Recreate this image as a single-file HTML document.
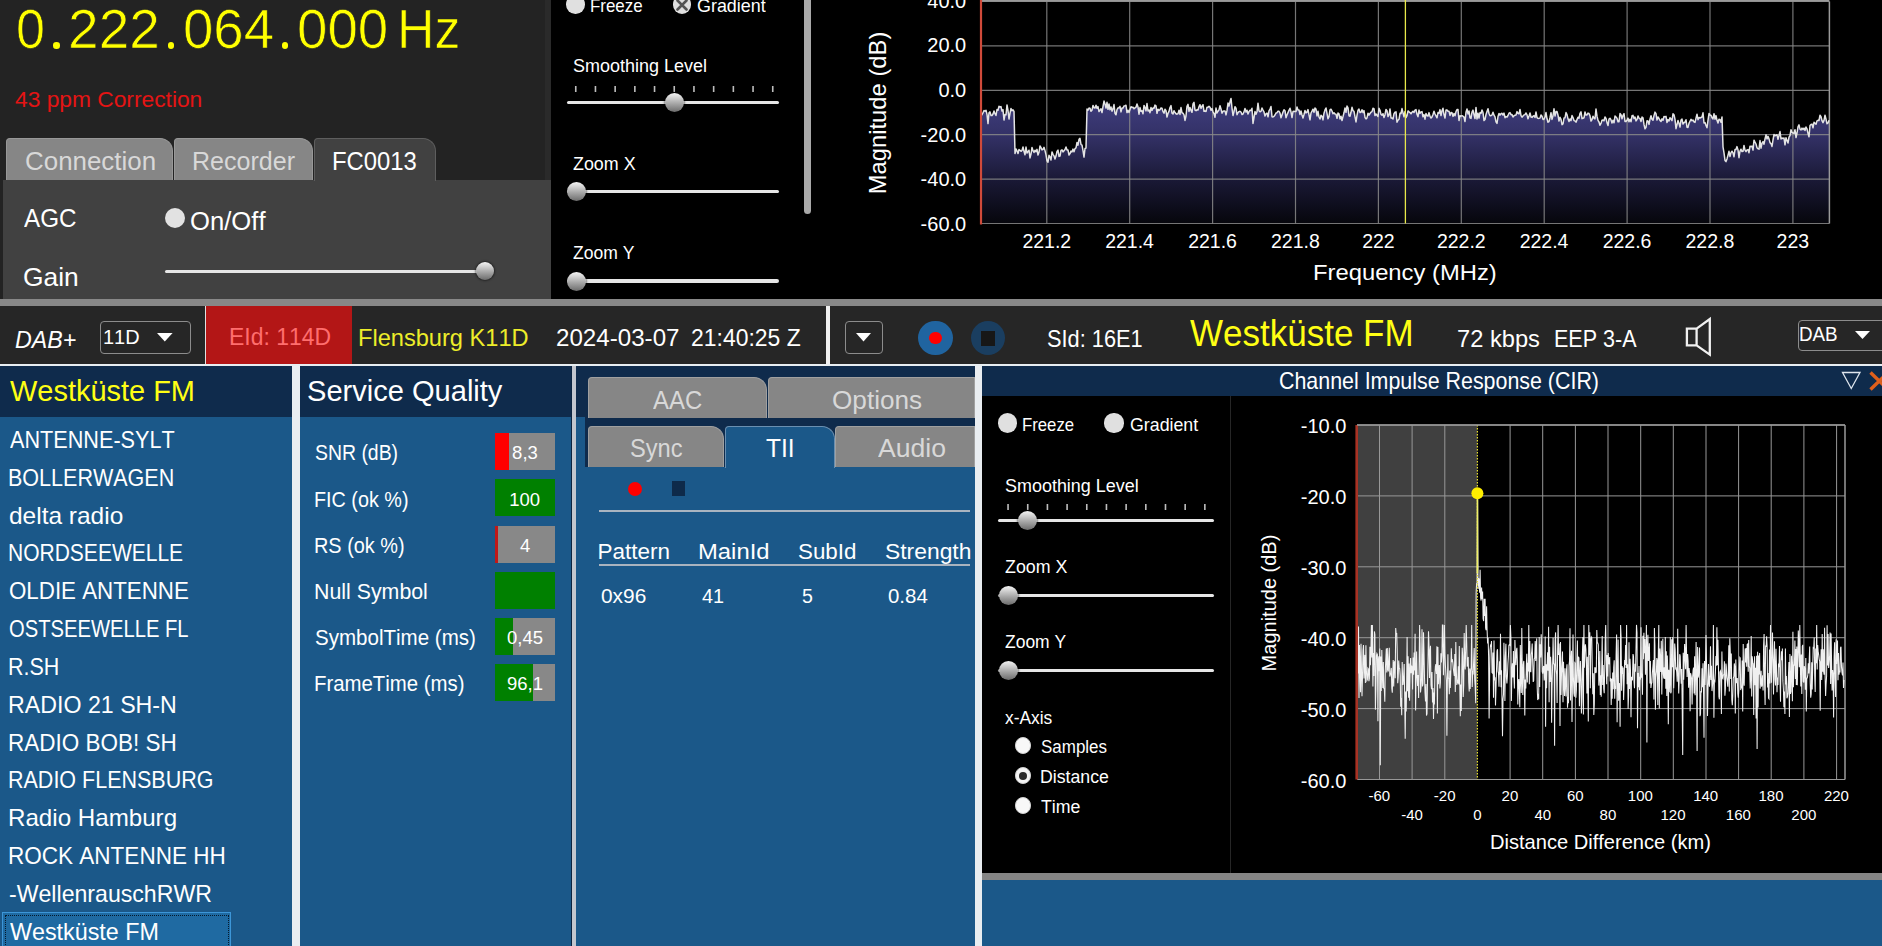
<!DOCTYPE html>
<html><head><meta charset="utf-8"><title>DAB Receiver</title>
<style>
html,body{margin:0;padding:0;width:1882px;height:946px;overflow:hidden;background:#000}
body{position:relative;font-family:"Liberation Sans",sans-serif}
.t{position:absolute;white-space:pre;transform-origin:0 0;font-kerning:none}
.r{position:absolute}
.s{position:absolute;overflow:visible}
</style></head><body>
<div class="r" style="left:0px;top:0px;width:1882px;height:946px;background:#000;"></div>
<div class="r" style="left:0px;top:0px;width:551px;height:299px;background:#232323;"></div>
<div class="r" style="left:545px;top:0px;width:6px;height:180px;background:#2a2a2a;"></div>
<div class="r" style="left:3px;top:180px;width:548px;height:119px;background:#414141;"></div>
<div class="r" style="left:0px;top:299px;width:1882px;height:7px;background:#888888;"></div>
<div class="r" style="left:0px;top:306px;width:1882px;height:58px;background:#262626;"></div>
<div class="r" style="left:0px;top:364px;width:1882px;height:2px;background:#e8eef2;"></div>
<div class="r" style="left:0px;top:366px;width:292px;height:580px;background:#1b5889;"></div>
<div class="r" style="left:0px;top:366px;width:292px;height:51px;background:#0f2b4c;"></div>
<div class="r" style="left:292px;top:366px;width:8px;height:580px;background:#e9edf1;"></div>
<div class="r" style="left:300px;top:366px;width:272px;height:580px;background:#1b5889;"></div>
<div class="r" style="left:300px;top:366px;width:272px;height:51px;background:#0f2b4c;"></div>
<div class="r" style="left:571px;top:366px;width:6px;height:580px;background:#0c2440;"></div>
<div class="r" style="left:572px;top:366px;width:4px;height:580px;background:#c2c6ce;"></div>
<div class="r" style="left:576px;top:366px;width:399px;height:580px;background:#1b5889;"></div>
<div class="r" style="left:576px;top:366px;width:399px;height:51px;background:#0f2b4c;"></div>
<div class="r" style="left:585px;top:417px;width:390px;height:50px;background:#0f2b4c;"></div>
<div class="r" style="left:975px;top:366px;width:7px;height:580px;background:#e9edf1;"></div>
<div class="r" style="left:982px;top:366px;width:900px;height:580px;background:#1b5889;"></div>
<div class="r" style="left:982px;top:366px;width:900px;height:30px;background:#0f2b4c;"></div>
<div class="r" style="left:982px;top:396px;width:900px;height:477px;background:#000;"></div>
<div class="r" style="left:982px;top:873px;width:900px;height:7px;background:#858585;"></div>
<div class="t" style="left:16.12px;top:-2px;font-size:55px;line-height:63px;color:#ffff00;transform:scaleX(0.9470);-webkit-text-stroke:0.7px #232323;">0</div>
<div class="r" style="left:53.4px;top:42.2px;width:6.6px;height:6.6px;border-radius:50%;background:#ffff00"></div>
<div class="t" style="left:68.05px;top:-2px;font-size:55px;line-height:63px;color:#ffff00;-webkit-text-stroke:0.7px #232323;">222</div>
<div class="r" style="left:167.6px;top:42.2px;width:6.6px;height:6.6px;border-radius:50%;background:#ffff00"></div>
<div class="t" style="left:182.52px;top:-2px;font-size:55px;line-height:63px;color:#ffff00;transform:scaleX(0.9929);-webkit-text-stroke:0.7px #232323;">064</div>
<div class="r" style="left:281.9px;top:42.2px;width:6.6px;height:6.6px;border-radius:50%;background:#ffff00"></div>
<div class="t" style="left:296.81px;top:-2px;font-size:55px;line-height:63px;color:#ffff00;transform:scaleX(0.9949);-webkit-text-stroke:0.7px #232323;">000</div>
<div class="t" style="left:396.55px;top:-2px;font-size:55px;line-height:63px;color:#ffff00;transform:scaleX(0.9425);-webkit-text-stroke:0.7px #232323;">Hz</div>
<div class="t" style="left:15.24px;top:87px;font-size:22px;line-height:25px;color:#e41414;transform:scaleX(1.0347);">43 ppm Correction</div>
<div class="r" style="left:6px;top:138px;width:167px;height:42px;background:#868686;border:1px solid #989898;border-bottom:none;box-sizing:border-box;border-radius:4px 13px 0 0"></div>
<div class="r" style="left:174px;top:138px;width:139px;height:42px;background:#868686;border:1px solid #989898;border-bottom:none;box-sizing:border-box;border-radius:4px 13px 0 0"></div>
<div class="r" style="left:314px;top:138px;width:122px;height:43px;background:#414141;border:1px solid #5e5e5e;border-bottom:none;box-sizing:border-box;border-radius:4px 13px 0 0"></div>
<div class="t" style="left:24.50px;top:147px;font-size:25.4px;line-height:29px;color:#d8d8d8;transform:scaleX(1.0207);">Connection</div>
<div class="t" style="left:192.00px;top:147px;font-size:25.4px;line-height:29px;color:#d8d8d8;transform:scaleX(0.9865);">Recorder</div>
<div class="t" style="left:331.69px;top:147px;font-size:25.4px;line-height:29px;color:#fff;transform:scaleX(0.9398);">FC0013</div>
<div class="t" style="left:24.40px;top:204px;font-size:25.5px;line-height:29px;color:#fff;transform:scaleX(0.9500);">AGC</div>
<div class="t" style="left:189.85px;top:207px;font-size:25.5px;line-height:29px;color:#fff;transform:scaleX(1.0059);">On/Off</div>
<div class="t" style="left:23.08px;top:263px;font-size:25.5px;line-height:29px;color:#fff;transform:scaleX(1.0340);">Gain</div>
<div class="r" style="left:165.0px;top:207.6px;width:20.4px;height:20.4px;border-radius:50%;background:#e2e2e2;"></div>
<div class="r" style="left:165px;top:269.8px;width:319px;height:3.4px;border-radius:2px;background:#e6e6e6"></div>
<div class="r" style="left:475.5px;top:261.8px;width:18.4px;height:18.4px;border-radius:50%;background:linear-gradient(#f4f4f4,#a8a8a8 55%,#6c6c6c);box-shadow:0 0 2px 1px rgba(0,0,0,.45)"></div>
<div class="r" style="left:566.2px;top:-4.8px;width:18.6px;height:18.6px;border-radius:50%;background:#e0e0e0;"></div>
<div class="t" style="left:590.25px;top:-5px;font-size:18.5px;line-height:21px;color:#fff;transform:scaleX(0.9127);">Freeze</div>
<div class="r" style="left:672.7px;top:-4.8px;width:18.6px;height:18.6px;border-radius:50%;background:#e0e0e0;"></div>
<svg class="s" style="left:672px;top:-5px" width="20" height="20" viewBox="0 0 20 20"><path d="M5.5 5.5L14.5 14.5M14.5 5.5L5.5 14.5" stroke="#555" stroke-width="2.6" stroke-linecap="round"/></svg>
<div class="t" style="left:697.10px;top:-5px;font-size:18.5px;line-height:21px;color:#fff;transform:scaleX(0.9681);">Gradient</div>
<div class="t" style="left:572.79px;top:55px;font-size:18.3px;line-height:21px;color:#fff;transform:scaleX(0.9834);">Smoothing Level</div>
<svg class="s" style="left:566px;top:86px;" width="215" height="6" viewBox="0 0 215 6"><rect x="8.95" y="0" width="1.6" height="6" fill="#bdbdbd"/><rect x="28.65" y="0" width="1.6" height="6" fill="#bdbdbd"/><rect x="48.35" y="0" width="1.6" height="6" fill="#bdbdbd"/><rect x="68.05" y="0" width="1.6" height="6" fill="#bdbdbd"/><rect x="87.75" y="0" width="1.6" height="6" fill="#bdbdbd"/><rect x="107.45" y="0" width="1.6" height="6" fill="#bdbdbd"/><rect x="127.15" y="0" width="1.6" height="6" fill="#bdbdbd"/><rect x="146.85" y="0" width="1.6" height="6" fill="#bdbdbd"/><rect x="166.55" y="0" width="1.6" height="6" fill="#bdbdbd"/><rect x="186.25" y="0" width="1.6" height="6" fill="#bdbdbd"/><rect x="205.95" y="0" width="1.6" height="6" fill="#bdbdbd"/></svg>
<div class="r" style="left:566.7px;top:100.5px;width:212.79999999999995px;height:3.3px;border-radius:2px;background:#e6e6e6"></div>
<div class="r" style="left:665.0px;top:93.3px;width:19.0px;height:19.0px;border-radius:50%;background:linear-gradient(#f4f4f4,#a8a8a8 55%,#6c6c6c);box-shadow:0 0 2px 1px rgba(0,0,0,.45)"></div>
<div class="t" style="left:572.76px;top:153px;font-size:18.3px;line-height:21px;color:#fff;transform:scaleX(0.9773);">Zoom X</div>
<div class="r" style="left:566.7px;top:189.5px;width:212.79999999999995px;height:3.3px;border-radius:2px;background:#e6e6e6"></div>
<div class="r" style="left:567.0px;top:182.0px;width:19.0px;height:19.0px;border-radius:50%;background:linear-gradient(#f4f4f4,#a8a8a8 55%,#6c6c6c);box-shadow:0 0 2px 1px rgba(0,0,0,.45)"></div>
<div class="t" style="left:572.77px;top:242px;font-size:18.3px;line-height:21px;color:#fff;transform:scaleX(0.9591);">Zoom Y</div>
<div class="r" style="left:566.7px;top:279.4px;width:212.79999999999995px;height:3.3px;border-radius:2px;background:#e6e6e6"></div>
<div class="r" style="left:567.0px;top:271.8px;width:19.0px;height:19.0px;border-radius:50%;background:linear-gradient(#f4f4f4,#a8a8a8 55%,#6c6c6c);box-shadow:0 0 2px 1px rgba(0,0,0,.45)"></div>
<div class="r" style="left:804.4px;top:-4px;width:7px;height:218px;border-radius:4px;background:#a9a9a9"></div>
<svg class="s" style="left:0;top:0" width="1882" height="300" viewBox="0 0 1882 300"><defs><linearGradient id="sg" x1="0" y1="0" x2="0" y2="1"><stop offset="0" stop-color="#403e80"/><stop offset="0.3" stop-color="#333166"/><stop offset="0.65" stop-color="#1a1936"/><stop offset="1" stop-color="#06060c"/></linearGradient></defs><rect x="981" y="1.5" width="848.4000000000001" height="222.0" fill="#000"/><polygon points="981,223.5 981.0,114.2 982.0,114.8 983.0,112.7 984.0,110.5 985.0,111.2 986.0,110.3 987.0,114.4 988.0,123.6 989.0,112.8 990.0,111.9 991.0,115.5 992.0,115.6 993.0,114.0 994.0,110.9 995.0,113.7 996.0,115.5 997.0,109.5 998.0,110.3 999.0,106.3 1000.0,107.1 1001.0,106.6 1002.0,111.1 1003.0,109.7 1004.0,120.0 1005.0,114.6 1006.0,114.9 1007.0,104.9 1008.0,110.5 1009.0,119.0 1010.0,113.3 1011.0,108.5 1012.0,110.7 1013.0,109.8 1014.0,111.3 1015.0,153.6 1016.0,148.9 1017.0,150.9 1018.0,153.6 1019.0,149.5 1020.0,150.3 1021.0,151.3 1022.0,150.5 1023.0,146.9 1024.0,151.3 1025.0,154.7 1026.0,147.1 1027.0,153.0 1028.0,151.6 1029.0,150.2 1030.0,157.9 1031.0,154.1 1032.0,147.4 1033.0,150.7 1034.0,152.5 1035.0,150.3 1036.0,151.7 1037.0,149.4 1038.0,155.1 1039.0,152.3 1040.0,145.9 1041.0,147.6 1042.0,149.9 1043.0,149.3 1044.0,147.3 1045.0,150.6 1046.0,154.9 1047.0,160.8 1048.0,162.2 1049.0,155.3 1050.0,156.8 1051.0,160.0 1052.0,151.9 1053.0,154.3 1054.0,155.9 1055.0,159.0 1056.0,156.1 1057.0,151.4 1058.0,150.1 1059.0,156.4 1060.0,156.0 1061.0,150.4 1062.0,149.9 1063.0,151.9 1064.0,150.7 1065.0,149.5 1066.0,147.0 1067.0,149.9 1068.0,150.1 1069.0,155.0 1070.0,153.6 1071.0,151.1 1072.0,151.9 1073.0,149.1 1074.0,151.8 1075.0,148.6 1076.0,147.9 1077.0,142.4 1078.0,145.2 1079.0,139.3 1080.0,138.4 1081.0,144.5 1082.0,145.2 1083.0,150.6 1084.0,157.1 1085.0,148.5 1086.0,148.1 1087.0,109.1 1088.0,110.2 1089.0,108.1 1090.0,108.2 1091.0,111.2 1092.0,110.2 1093.0,105.4 1094.0,107.7 1095.0,108.0 1096.0,105.2 1097.0,108.3 1098.0,106.6 1099.0,111.6 1100.0,110.1 1101.0,108.8 1102.0,112.5 1103.0,106.7 1104.0,101.1 1105.0,103.9 1106.0,108.0 1107.0,102.3 1108.0,109.3 1109.0,104.0 1110.0,109.8 1111.0,107.0 1112.0,111.2 1113.0,108.9 1114.0,104.6 1115.0,113.3 1116.0,114.8 1117.0,109.6 1118.0,108.0 1119.0,107.7 1120.0,106.4 1121.0,111.9 1122.0,108.0 1123.0,108.1 1124.0,106.0 1125.0,105.7 1126.0,105.3 1127.0,112.6 1128.0,110.2 1129.0,112.5 1130.0,109.5 1131.0,106.7 1132.0,107.4 1133.0,107.2 1134.0,108.8 1135.0,107.9 1136.0,107.2 1137.0,104.0 1138.0,106.9 1139.0,114.2 1140.0,107.6 1141.0,111.3 1142.0,110.9 1143.0,113.7 1144.0,105.4 1145.0,107.5 1146.0,110.9 1147.0,103.6 1148.0,111.0 1149.0,110.1 1150.0,112.7 1151.0,107.5 1152.0,110.4 1153.0,108.1 1154.0,108.2 1155.0,105.1 1156.0,105.8 1157.0,113.3 1158.0,109.2 1159.0,110.5 1160.0,109.7 1161.0,108.0 1162.0,108.3 1163.0,111.6 1164.0,113.2 1165.0,109.3 1166.0,110.7 1167.0,117.1 1168.0,113.4 1169.0,111.4 1170.0,107.5 1171.0,105.6 1172.0,113.1 1173.0,114.0 1174.0,110.7 1175.0,112.5 1176.0,113.8 1177.0,114.2 1178.0,113.6 1179.0,110.3 1180.0,114.4 1181.0,107.6 1182.0,112.8 1183.0,113.2 1184.0,114.9 1185.0,120.4 1186.0,116.0 1187.0,106.3 1188.0,104.4 1189.0,111.4 1190.0,107.5 1191.0,110.3 1192.0,112.3 1193.0,104.0 1194.0,102.4 1195.0,110.1 1196.0,110.7 1197.0,109.8 1198.0,110.0 1199.0,106.7 1200.0,104.7 1201.0,108.4 1202.0,106.1 1203.0,104.7 1204.0,111.3 1205.0,111.1 1206.0,111.5 1207.0,107.2 1208.0,107.2 1209.0,106.3 1210.0,107.2 1211.0,110.4 1212.0,108.5 1213.0,111.8 1214.0,113.6 1215.0,117.2 1216.0,108.1 1217.0,113.0 1218.0,111.2 1219.0,109.9 1220.0,105.7 1221.0,109.0 1222.0,113.2 1223.0,111.3 1224.0,111.1 1225.0,110.9 1226.0,114.9 1227.0,110.4 1228.0,103.1 1229.0,106.0 1230.0,101.8 1231.0,98.4 1232.0,108.1 1233.0,115.5 1234.0,111.5 1235.0,106.7 1236.0,108.1 1237.0,114.7 1238.0,112.7 1239.0,111.6 1240.0,111.3 1241.0,112.0 1242.0,114.6 1243.0,114.0 1244.0,111.9 1245.0,108.4 1246.0,112.1 1247.0,110.2 1248.0,114.0 1249.0,111.6 1250.0,110.3 1251.0,110.6 1252.0,108.2 1253.0,123.4 1254.0,117.5 1255.0,111.6 1256.0,114.3 1257.0,111.8 1258.0,103.2 1259.0,110.8 1260.0,111.8 1261.0,111.3 1262.0,108.0 1263.0,110.1 1264.0,111.8 1265.0,116.0 1266.0,113.8 1267.0,113.1 1268.0,116.8 1269.0,110.8 1270.0,109.1 1271.0,106.5 1272.0,116.8 1273.0,117.0 1274.0,116.3 1275.0,115.0 1276.0,113.0 1277.0,112.7 1278.0,111.2 1279.0,111.3 1280.0,113.2 1281.0,117.8 1282.0,115.0 1283.0,112.0 1284.0,109.8 1285.0,110.7 1286.0,117.7 1287.0,115.1 1288.0,112.6 1289.0,110.4 1290.0,108.2 1291.0,112.0 1292.0,117.6 1293.0,111.5 1294.0,111.2 1295.0,111.6 1296.0,111.6 1297.0,106.9 1298.0,110.1 1299.0,110.0 1300.0,114.5 1301.0,110.9 1302.0,115.0 1303.0,118.0 1304.0,114.5 1305.0,110.5 1306.0,112.9 1307.0,112.1 1308.0,109.6 1309.0,114.9 1310.0,119.8 1311.0,113.0 1312.0,111.2 1313.0,109.2 1314.0,112.4 1315.0,108.0 1316.0,109.0 1317.0,115.9 1318.0,111.3 1319.0,117.0 1320.0,119.0 1321.0,115.2 1322.0,116.3 1323.0,119.9 1324.0,113.2 1325.0,109.9 1326.0,108.0 1327.0,113.3 1328.0,118.8 1329.0,116.7 1330.0,109.9 1331.0,109.2 1332.0,111.0 1333.0,113.7 1334.0,112.8 1335.0,114.0 1336.0,114.2 1337.0,118.3 1338.0,113.0 1339.0,113.9 1340.0,118.9 1341.0,116.2 1342.0,120.5 1343.0,116.6 1344.0,112.8 1345.0,107.9 1346.0,112.3 1347.0,106.0 1348.0,107.9 1349.0,115.9 1350.0,116.3 1351.0,112.3 1352.0,107.3 1353.0,110.7 1354.0,111.4 1355.0,116.8 1356.0,121.9 1357.0,115.3 1358.0,110.3 1359.0,109.1 1360.0,112.6 1361.0,112.3 1362.0,109.7 1363.0,112.6 1364.0,110.6 1365.0,117.5 1366.0,118.9 1367.0,117.9 1368.0,113.2 1369.0,115.2 1370.0,113.5 1371.0,112.2 1372.0,111.6 1373.0,108.3 1374.0,108.6 1375.0,115.6 1376.0,114.0 1377.0,115.2 1378.0,116.4 1379.0,108.2 1380.0,110.3 1381.0,114.4 1382.0,115.3 1383.0,113.7 1384.0,117.5 1385.0,114.7 1386.0,109.5 1387.0,110.7 1388.0,116.6 1389.0,115.1 1390.0,108.9 1391.0,118.0 1392.0,118.1 1393.0,119.0 1394.0,113.7 1395.0,112.3 1396.0,111.9 1397.0,122.2 1398.0,120.2 1399.0,119.3 1400.0,113.3 1401.0,113.5 1402.0,108.6 1403.0,112.7 1404.0,116.8 1405.0,111.5 1406.0,117.6 1407.0,115.7 1408.0,110.9 1409.0,111.9 1410.0,112.6 1411.0,113.8 1412.0,112.2 1413.0,111.2 1414.0,112.4 1415.0,110.1 1416.0,109.6 1417.0,114.3 1418.0,116.7 1419.0,110.1 1420.0,113.4 1421.0,111.9 1422.0,111.6 1423.0,116.8 1424.0,114.6 1425.0,119.2 1426.0,113.5 1427.0,115.6 1428.0,116.1 1429.0,112.6 1430.0,116.4 1431.0,118.0 1432.0,116.9 1433.0,114.5 1434.0,111.2 1435.0,114.0 1436.0,115.8 1437.0,117.8 1438.0,112.6 1439.0,113.3 1440.0,109.6 1441.0,115.6 1442.0,110.7 1443.0,108.3 1444.0,114.6 1445.0,118.0 1446.0,110.0 1447.0,110.1 1448.0,111.3 1449.0,111.2 1450.0,115.4 1451.0,112.4 1452.0,112.8 1453.0,116.4 1454.0,113.5 1455.0,115.8 1456.0,111.6 1457.0,109.5 1458.0,109.6 1459.0,120.5 1460.0,115.8 1461.0,116.2 1462.0,115.7 1463.0,116.2 1464.0,117.1 1465.0,121.5 1466.0,112.3 1467.0,109.0 1468.0,113.9 1469.0,110.9 1470.0,117.9 1471.0,118.4 1472.0,112.1 1473.0,110.1 1474.0,114.6 1475.0,118.5 1476.0,107.4 1477.0,118.9 1478.0,113.2 1479.0,118.1 1480.0,112.7 1481.0,113.3 1482.0,109.9 1483.0,112.5 1484.0,120.6 1485.0,119.5 1486.0,114.6 1487.0,111.5 1488.0,108.7 1489.0,113.5 1490.0,115.7 1491.0,115.7 1492.0,115.0 1493.0,112.2 1494.0,115.2 1495.0,116.9 1496.0,121.9 1497.0,123.4 1498.0,116.5 1499.0,113.5 1500.0,115.2 1501.0,113.7 1502.0,113.3 1503.0,115.0 1504.0,113.1 1505.0,117.7 1506.0,116.6 1507.0,117.1 1508.0,115.5 1509.0,113.2 1510.0,112.6 1511.0,114.7 1512.0,114.6 1513.0,117.0 1514.0,115.8 1515.0,115.2 1516.0,115.0 1517.0,111.6 1518.0,113.4 1519.0,113.9 1520.0,109.4 1521.0,115.7 1522.0,117.2 1523.0,116.0 1524.0,114.9 1525.0,114.6 1526.0,113.0 1527.0,114.9 1528.0,118.8 1529.0,116.0 1530.0,112.9 1531.0,117.0 1532.0,117.4 1533.0,116.2 1534.0,115.7 1535.0,117.5 1536.0,111.9 1537.0,117.6 1538.0,118.3 1539.0,118.4 1540.0,118.1 1541.0,114.9 1542.0,116.2 1543.0,119.4 1544.0,119.2 1545.0,117.1 1546.0,112.5 1547.0,118.8 1548.0,122.2 1549.0,121.6 1550.0,117.7 1551.0,112.7 1552.0,119.4 1553.0,115.7 1554.0,108.8 1555.0,116.0 1556.0,111.6 1557.0,111.5 1558.0,115.2 1559.0,121.1 1560.0,117.2 1561.0,119.3 1562.0,124.7 1563.0,124.0 1564.0,118.0 1565.0,117.8 1566.0,112.6 1567.0,114.6 1568.0,118.8 1569.0,121.5 1570.0,118.9 1571.0,120.6 1572.0,115.6 1573.0,117.5 1574.0,120.6 1575.0,120.9 1576.0,122.1 1577.0,119.6 1578.0,117.2 1579.0,118.2 1580.0,113.5 1581.0,111.9 1582.0,118.7 1583.0,118.2 1584.0,117.8 1585.0,112.0 1586.0,115.1 1587.0,115.0 1588.0,113.1 1589.0,113.5 1590.0,115.9 1591.0,121.1 1592.0,119.5 1593.0,116.2 1594.0,118.1 1595.0,118.9 1596.0,109.0 1597.0,116.2 1598.0,120.4 1599.0,122.0 1600.0,125.2 1601.0,123.4 1602.0,120.2 1603.0,120.0 1604.0,120.8 1605.0,116.9 1606.0,118.4 1607.0,122.7 1608.0,125.6 1609.0,119.1 1610.0,118.2 1611.0,119.9 1612.0,123.1 1613.0,120.2 1614.0,122.8 1615.0,116.0 1616.0,117.1 1617.0,118.2 1618.0,121.8 1619.0,121.7 1620.0,113.5 1621.0,114.7 1622.0,118.7 1623.0,115.6 1624.0,113.7 1625.0,121.5 1626.0,121.4 1627.0,120.4 1628.0,118.1 1629.0,121.8 1630.0,119.3 1631.0,121.8 1632.0,115.8 1633.0,115.4 1634.0,118.5 1635.0,117.0 1636.0,120.9 1637.0,119.6 1638.0,115.9 1639.0,118.3 1640.0,118.4 1641.0,121.5 1642.0,117.1 1643.0,117.9 1644.0,124.4 1645.0,128.8 1646.0,127.4 1647.0,120.8 1648.0,120.9 1649.0,124.4 1650.0,119.1 1651.0,115.8 1652.0,119.2 1653.0,120.3 1654.0,115.6 1655.0,112.1 1656.0,113.6 1657.0,120.1 1658.0,117.0 1659.0,118.5 1660.0,120.4 1661.0,121.4 1662.0,118.9 1663.0,120.3 1664.0,116.4 1665.0,116.9 1666.0,116.4 1667.0,122.6 1668.0,119.6 1669.0,121.0 1670.0,117.7 1671.0,119.0 1672.0,120.7 1673.0,113.8 1674.0,114.7 1675.0,119.3 1676.0,128.7 1677.0,124.5 1678.0,120.4 1679.0,123.4 1680.0,127.1 1681.0,120.0 1682.0,119.1 1683.0,124.0 1684.0,122.7 1685.0,122.1 1686.0,119.8 1687.0,127.2 1688.0,127.4 1689.0,123.4 1690.0,121.3 1691.0,119.3 1692.0,120.7 1693.0,120.0 1694.0,121.8 1695.0,122.4 1696.0,118.2 1697.0,114.2 1698.0,119.7 1699.0,117.5 1700.0,118.0 1701.0,117.5 1702.0,117.0 1703.0,112.8 1704.0,123.0 1705.0,122.6 1706.0,125.5 1707.0,127.7 1708.0,120.4 1709.0,113.5 1710.0,115.2 1711.0,115.2 1712.0,117.8 1713.0,118.9 1714.0,113.7 1715.0,119.2 1716.0,115.6 1717.0,120.3 1718.0,123.0 1719.0,119.2 1720.0,119.6 1721.0,122.2 1722.0,116.9 1723.0,146.8 1724.0,152.9 1725.0,160.4 1726.0,161.6 1727.0,158.9 1728.0,155.2 1729.0,151.3 1730.0,156.5 1731.0,152.6 1732.0,151.2 1733.0,152.8 1734.0,156.7 1735.0,149.6 1736.0,149.6 1737.0,146.6 1738.0,149.9 1739.0,157.7 1740.0,151.1 1741.0,149.2 1742.0,151.6 1743.0,151.3 1744.0,145.5 1745.0,150.1 1746.0,151.7 1747.0,149.9 1748.0,149.6 1749.0,152.7 1750.0,146.2 1751.0,146.7 1752.0,146.1 1753.0,150.1 1754.0,140.2 1755.0,142.2 1756.0,144.0 1757.0,147.8 1758.0,148.7 1759.0,149.1 1760.0,140.6 1761.0,148.2 1762.0,143.1 1763.0,141.6 1764.0,144.2 1765.0,139.0 1766.0,134.8 1767.0,138.9 1768.0,136.4 1769.0,138.9 1770.0,142.6 1771.0,143.6 1772.0,146.5 1773.0,140.0 1774.0,134.4 1775.0,135.8 1776.0,135.2 1777.0,134.8 1778.0,139.3 1779.0,135.4 1780.0,131.6 1781.0,139.0 1782.0,138.0 1783.0,138.6 1784.0,138.0 1785.0,144.8 1786.0,137.7 1787.0,140.5 1788.0,143.0 1789.0,137.2 1790.0,135.6 1791.0,129.7 1792.0,132.5 1793.0,133.0 1794.0,133.2 1795.0,129.7 1796.0,137.6 1797.0,133.0 1798.0,126.8 1799.0,124.8 1800.0,129.2 1801.0,130.0 1802.0,128.1 1803.0,129.6 1804.0,128.1 1805.0,130.5 1806.0,127.0 1807.0,128.8 1808.0,133.4 1809.0,136.8 1810.0,125.5 1811.0,124.4 1812.0,124.1 1813.0,127.8 1814.0,122.3 1815.0,123.2 1816.0,124.2 1817.0,120.9 1818.0,120.3 1819.0,120.5 1820.0,115.2 1821.0,116.7 1822.0,120.7 1823.0,122.7 1824.0,120.4 1825.0,115.2 1826.0,119.1 1827.0,123.8 1828.0,122.9 1829.0,120.3 1829.4,223.5" fill="url(#sg)"/><line x1="981" y1="1.5" x2="1829.4" y2="1.5" stroke="#8a8a8a" stroke-opacity="0.85" stroke-width="1.2"/><line x1="981" y1="45.9" x2="1829.4" y2="45.9" stroke="#8a8a8a" stroke-opacity="0.85" stroke-width="1.2"/><line x1="981" y1="90.3" x2="1829.4" y2="90.3" stroke="#8a8a8a" stroke-opacity="0.85" stroke-width="1.2"/><line x1="981" y1="134.7" x2="1829.4" y2="134.7" stroke="#8a8a8a" stroke-opacity="0.85" stroke-width="1.2"/><line x1="981" y1="179.1" x2="1829.4" y2="179.1" stroke="#8a8a8a" stroke-opacity="0.85" stroke-width="1.2"/><line x1="981" y1="223.5" x2="1829.4" y2="223.5" stroke="#8a8a8a" stroke-opacity="0.85" stroke-width="1.2"/><line x1="1046.8" y1="1.5" x2="1046.8" y2="223.5" stroke="#8a8a8a" stroke-opacity="0.85" stroke-width="1.2"/><line x1="1129.7" y1="1.5" x2="1129.7" y2="223.5" stroke="#8a8a8a" stroke-opacity="0.85" stroke-width="1.2"/><line x1="1212.6" y1="1.5" x2="1212.6" y2="223.5" stroke="#8a8a8a" stroke-opacity="0.85" stroke-width="1.2"/><line x1="1295.5" y1="1.5" x2="1295.5" y2="223.5" stroke="#8a8a8a" stroke-opacity="0.85" stroke-width="1.2"/><line x1="1378.4" y1="1.5" x2="1378.4" y2="223.5" stroke="#8a8a8a" stroke-opacity="0.85" stroke-width="1.2"/><line x1="1461.3" y1="1.5" x2="1461.3" y2="223.5" stroke="#8a8a8a" stroke-opacity="0.85" stroke-width="1.2"/><line x1="1544.2" y1="1.5" x2="1544.2" y2="223.5" stroke="#8a8a8a" stroke-opacity="0.85" stroke-width="1.2"/><line x1="1627.1" y1="1.5" x2="1627.1" y2="223.5" stroke="#8a8a8a" stroke-opacity="0.85" stroke-width="1.2"/><line x1="1710.0" y1="1.5" x2="1710.0" y2="223.5" stroke="#8a8a8a" stroke-opacity="0.85" stroke-width="1.2"/><line x1="1792.9" y1="1.5" x2="1792.9" y2="223.5" stroke="#8a8a8a" stroke-opacity="0.85" stroke-width="1.2"/><line x1="1829.4" y1="1.5" x2="1829.4" y2="223.5" stroke="#9a9a9a" stroke-width="1.5"/><line x1="981" y1="0.5" x2="1829.4" y2="0.5" stroke="#9a9a9a" stroke-width="2.5"/><polyline points="981.0,114.2 982.0,114.8 983.0,112.7 984.0,110.5 985.0,111.2 986.0,110.3 987.0,114.4 988.0,123.6 989.0,112.8 990.0,111.9 991.0,115.5 992.0,115.6 993.0,114.0 994.0,110.9 995.0,113.7 996.0,115.5 997.0,109.5 998.0,110.3 999.0,106.3 1000.0,107.1 1001.0,106.6 1002.0,111.1 1003.0,109.7 1004.0,120.0 1005.0,114.6 1006.0,114.9 1007.0,104.9 1008.0,110.5 1009.0,119.0 1010.0,113.3 1011.0,108.5 1012.0,110.7 1013.0,109.8 1014.0,111.3 1015.0,153.6 1016.0,148.9 1017.0,150.9 1018.0,153.6 1019.0,149.5 1020.0,150.3 1021.0,151.3 1022.0,150.5 1023.0,146.9 1024.0,151.3 1025.0,154.7 1026.0,147.1 1027.0,153.0 1028.0,151.6 1029.0,150.2 1030.0,157.9 1031.0,154.1 1032.0,147.4 1033.0,150.7 1034.0,152.5 1035.0,150.3 1036.0,151.7 1037.0,149.4 1038.0,155.1 1039.0,152.3 1040.0,145.9 1041.0,147.6 1042.0,149.9 1043.0,149.3 1044.0,147.3 1045.0,150.6 1046.0,154.9 1047.0,160.8 1048.0,162.2 1049.0,155.3 1050.0,156.8 1051.0,160.0 1052.0,151.9 1053.0,154.3 1054.0,155.9 1055.0,159.0 1056.0,156.1 1057.0,151.4 1058.0,150.1 1059.0,156.4 1060.0,156.0 1061.0,150.4 1062.0,149.9 1063.0,151.9 1064.0,150.7 1065.0,149.5 1066.0,147.0 1067.0,149.9 1068.0,150.1 1069.0,155.0 1070.0,153.6 1071.0,151.1 1072.0,151.9 1073.0,149.1 1074.0,151.8 1075.0,148.6 1076.0,147.9 1077.0,142.4 1078.0,145.2 1079.0,139.3 1080.0,138.4 1081.0,144.5 1082.0,145.2 1083.0,150.6 1084.0,157.1 1085.0,148.5 1086.0,148.1 1087.0,109.1 1088.0,110.2 1089.0,108.1 1090.0,108.2 1091.0,111.2 1092.0,110.2 1093.0,105.4 1094.0,107.7 1095.0,108.0 1096.0,105.2 1097.0,108.3 1098.0,106.6 1099.0,111.6 1100.0,110.1 1101.0,108.8 1102.0,112.5 1103.0,106.7 1104.0,101.1 1105.0,103.9 1106.0,108.0 1107.0,102.3 1108.0,109.3 1109.0,104.0 1110.0,109.8 1111.0,107.0 1112.0,111.2 1113.0,108.9 1114.0,104.6 1115.0,113.3 1116.0,114.8 1117.0,109.6 1118.0,108.0 1119.0,107.7 1120.0,106.4 1121.0,111.9 1122.0,108.0 1123.0,108.1 1124.0,106.0 1125.0,105.7 1126.0,105.3 1127.0,112.6 1128.0,110.2 1129.0,112.5 1130.0,109.5 1131.0,106.7 1132.0,107.4 1133.0,107.2 1134.0,108.8 1135.0,107.9 1136.0,107.2 1137.0,104.0 1138.0,106.9 1139.0,114.2 1140.0,107.6 1141.0,111.3 1142.0,110.9 1143.0,113.7 1144.0,105.4 1145.0,107.5 1146.0,110.9 1147.0,103.6 1148.0,111.0 1149.0,110.1 1150.0,112.7 1151.0,107.5 1152.0,110.4 1153.0,108.1 1154.0,108.2 1155.0,105.1 1156.0,105.8 1157.0,113.3 1158.0,109.2 1159.0,110.5 1160.0,109.7 1161.0,108.0 1162.0,108.3 1163.0,111.6 1164.0,113.2 1165.0,109.3 1166.0,110.7 1167.0,117.1 1168.0,113.4 1169.0,111.4 1170.0,107.5 1171.0,105.6 1172.0,113.1 1173.0,114.0 1174.0,110.7 1175.0,112.5 1176.0,113.8 1177.0,114.2 1178.0,113.6 1179.0,110.3 1180.0,114.4 1181.0,107.6 1182.0,112.8 1183.0,113.2 1184.0,114.9 1185.0,120.4 1186.0,116.0 1187.0,106.3 1188.0,104.4 1189.0,111.4 1190.0,107.5 1191.0,110.3 1192.0,112.3 1193.0,104.0 1194.0,102.4 1195.0,110.1 1196.0,110.7 1197.0,109.8 1198.0,110.0 1199.0,106.7 1200.0,104.7 1201.0,108.4 1202.0,106.1 1203.0,104.7 1204.0,111.3 1205.0,111.1 1206.0,111.5 1207.0,107.2 1208.0,107.2 1209.0,106.3 1210.0,107.2 1211.0,110.4 1212.0,108.5 1213.0,111.8 1214.0,113.6 1215.0,117.2 1216.0,108.1 1217.0,113.0 1218.0,111.2 1219.0,109.9 1220.0,105.7 1221.0,109.0 1222.0,113.2 1223.0,111.3 1224.0,111.1 1225.0,110.9 1226.0,114.9 1227.0,110.4 1228.0,103.1 1229.0,106.0 1230.0,101.8 1231.0,98.4 1232.0,108.1 1233.0,115.5 1234.0,111.5 1235.0,106.7 1236.0,108.1 1237.0,114.7 1238.0,112.7 1239.0,111.6 1240.0,111.3 1241.0,112.0 1242.0,114.6 1243.0,114.0 1244.0,111.9 1245.0,108.4 1246.0,112.1 1247.0,110.2 1248.0,114.0 1249.0,111.6 1250.0,110.3 1251.0,110.6 1252.0,108.2 1253.0,123.4 1254.0,117.5 1255.0,111.6 1256.0,114.3 1257.0,111.8 1258.0,103.2 1259.0,110.8 1260.0,111.8 1261.0,111.3 1262.0,108.0 1263.0,110.1 1264.0,111.8 1265.0,116.0 1266.0,113.8 1267.0,113.1 1268.0,116.8 1269.0,110.8 1270.0,109.1 1271.0,106.5 1272.0,116.8 1273.0,117.0 1274.0,116.3 1275.0,115.0 1276.0,113.0 1277.0,112.7 1278.0,111.2 1279.0,111.3 1280.0,113.2 1281.0,117.8 1282.0,115.0 1283.0,112.0 1284.0,109.8 1285.0,110.7 1286.0,117.7 1287.0,115.1 1288.0,112.6 1289.0,110.4 1290.0,108.2 1291.0,112.0 1292.0,117.6 1293.0,111.5 1294.0,111.2 1295.0,111.6 1296.0,111.6 1297.0,106.9 1298.0,110.1 1299.0,110.0 1300.0,114.5 1301.0,110.9 1302.0,115.0 1303.0,118.0 1304.0,114.5 1305.0,110.5 1306.0,112.9 1307.0,112.1 1308.0,109.6 1309.0,114.9 1310.0,119.8 1311.0,113.0 1312.0,111.2 1313.0,109.2 1314.0,112.4 1315.0,108.0 1316.0,109.0 1317.0,115.9 1318.0,111.3 1319.0,117.0 1320.0,119.0 1321.0,115.2 1322.0,116.3 1323.0,119.9 1324.0,113.2 1325.0,109.9 1326.0,108.0 1327.0,113.3 1328.0,118.8 1329.0,116.7 1330.0,109.9 1331.0,109.2 1332.0,111.0 1333.0,113.7 1334.0,112.8 1335.0,114.0 1336.0,114.2 1337.0,118.3 1338.0,113.0 1339.0,113.9 1340.0,118.9 1341.0,116.2 1342.0,120.5 1343.0,116.6 1344.0,112.8 1345.0,107.9 1346.0,112.3 1347.0,106.0 1348.0,107.9 1349.0,115.9 1350.0,116.3 1351.0,112.3 1352.0,107.3 1353.0,110.7 1354.0,111.4 1355.0,116.8 1356.0,121.9 1357.0,115.3 1358.0,110.3 1359.0,109.1 1360.0,112.6 1361.0,112.3 1362.0,109.7 1363.0,112.6 1364.0,110.6 1365.0,117.5 1366.0,118.9 1367.0,117.9 1368.0,113.2 1369.0,115.2 1370.0,113.5 1371.0,112.2 1372.0,111.6 1373.0,108.3 1374.0,108.6 1375.0,115.6 1376.0,114.0 1377.0,115.2 1378.0,116.4 1379.0,108.2 1380.0,110.3 1381.0,114.4 1382.0,115.3 1383.0,113.7 1384.0,117.5 1385.0,114.7 1386.0,109.5 1387.0,110.7 1388.0,116.6 1389.0,115.1 1390.0,108.9 1391.0,118.0 1392.0,118.1 1393.0,119.0 1394.0,113.7 1395.0,112.3 1396.0,111.9 1397.0,122.2 1398.0,120.2 1399.0,119.3 1400.0,113.3 1401.0,113.5 1402.0,108.6 1403.0,112.7 1404.0,116.8 1405.0,111.5 1406.0,117.6 1407.0,115.7 1408.0,110.9 1409.0,111.9 1410.0,112.6 1411.0,113.8 1412.0,112.2 1413.0,111.2 1414.0,112.4 1415.0,110.1 1416.0,109.6 1417.0,114.3 1418.0,116.7 1419.0,110.1 1420.0,113.4 1421.0,111.9 1422.0,111.6 1423.0,116.8 1424.0,114.6 1425.0,119.2 1426.0,113.5 1427.0,115.6 1428.0,116.1 1429.0,112.6 1430.0,116.4 1431.0,118.0 1432.0,116.9 1433.0,114.5 1434.0,111.2 1435.0,114.0 1436.0,115.8 1437.0,117.8 1438.0,112.6 1439.0,113.3 1440.0,109.6 1441.0,115.6 1442.0,110.7 1443.0,108.3 1444.0,114.6 1445.0,118.0 1446.0,110.0 1447.0,110.1 1448.0,111.3 1449.0,111.2 1450.0,115.4 1451.0,112.4 1452.0,112.8 1453.0,116.4 1454.0,113.5 1455.0,115.8 1456.0,111.6 1457.0,109.5 1458.0,109.6 1459.0,120.5 1460.0,115.8 1461.0,116.2 1462.0,115.7 1463.0,116.2 1464.0,117.1 1465.0,121.5 1466.0,112.3 1467.0,109.0 1468.0,113.9 1469.0,110.9 1470.0,117.9 1471.0,118.4 1472.0,112.1 1473.0,110.1 1474.0,114.6 1475.0,118.5 1476.0,107.4 1477.0,118.9 1478.0,113.2 1479.0,118.1 1480.0,112.7 1481.0,113.3 1482.0,109.9 1483.0,112.5 1484.0,120.6 1485.0,119.5 1486.0,114.6 1487.0,111.5 1488.0,108.7 1489.0,113.5 1490.0,115.7 1491.0,115.7 1492.0,115.0 1493.0,112.2 1494.0,115.2 1495.0,116.9 1496.0,121.9 1497.0,123.4 1498.0,116.5 1499.0,113.5 1500.0,115.2 1501.0,113.7 1502.0,113.3 1503.0,115.0 1504.0,113.1 1505.0,117.7 1506.0,116.6 1507.0,117.1 1508.0,115.5 1509.0,113.2 1510.0,112.6 1511.0,114.7 1512.0,114.6 1513.0,117.0 1514.0,115.8 1515.0,115.2 1516.0,115.0 1517.0,111.6 1518.0,113.4 1519.0,113.9 1520.0,109.4 1521.0,115.7 1522.0,117.2 1523.0,116.0 1524.0,114.9 1525.0,114.6 1526.0,113.0 1527.0,114.9 1528.0,118.8 1529.0,116.0 1530.0,112.9 1531.0,117.0 1532.0,117.4 1533.0,116.2 1534.0,115.7 1535.0,117.5 1536.0,111.9 1537.0,117.6 1538.0,118.3 1539.0,118.4 1540.0,118.1 1541.0,114.9 1542.0,116.2 1543.0,119.4 1544.0,119.2 1545.0,117.1 1546.0,112.5 1547.0,118.8 1548.0,122.2 1549.0,121.6 1550.0,117.7 1551.0,112.7 1552.0,119.4 1553.0,115.7 1554.0,108.8 1555.0,116.0 1556.0,111.6 1557.0,111.5 1558.0,115.2 1559.0,121.1 1560.0,117.2 1561.0,119.3 1562.0,124.7 1563.0,124.0 1564.0,118.0 1565.0,117.8 1566.0,112.6 1567.0,114.6 1568.0,118.8 1569.0,121.5 1570.0,118.9 1571.0,120.6 1572.0,115.6 1573.0,117.5 1574.0,120.6 1575.0,120.9 1576.0,122.1 1577.0,119.6 1578.0,117.2 1579.0,118.2 1580.0,113.5 1581.0,111.9 1582.0,118.7 1583.0,118.2 1584.0,117.8 1585.0,112.0 1586.0,115.1 1587.0,115.0 1588.0,113.1 1589.0,113.5 1590.0,115.9 1591.0,121.1 1592.0,119.5 1593.0,116.2 1594.0,118.1 1595.0,118.9 1596.0,109.0 1597.0,116.2 1598.0,120.4 1599.0,122.0 1600.0,125.2 1601.0,123.4 1602.0,120.2 1603.0,120.0 1604.0,120.8 1605.0,116.9 1606.0,118.4 1607.0,122.7 1608.0,125.6 1609.0,119.1 1610.0,118.2 1611.0,119.9 1612.0,123.1 1613.0,120.2 1614.0,122.8 1615.0,116.0 1616.0,117.1 1617.0,118.2 1618.0,121.8 1619.0,121.7 1620.0,113.5 1621.0,114.7 1622.0,118.7 1623.0,115.6 1624.0,113.7 1625.0,121.5 1626.0,121.4 1627.0,120.4 1628.0,118.1 1629.0,121.8 1630.0,119.3 1631.0,121.8 1632.0,115.8 1633.0,115.4 1634.0,118.5 1635.0,117.0 1636.0,120.9 1637.0,119.6 1638.0,115.9 1639.0,118.3 1640.0,118.4 1641.0,121.5 1642.0,117.1 1643.0,117.9 1644.0,124.4 1645.0,128.8 1646.0,127.4 1647.0,120.8 1648.0,120.9 1649.0,124.4 1650.0,119.1 1651.0,115.8 1652.0,119.2 1653.0,120.3 1654.0,115.6 1655.0,112.1 1656.0,113.6 1657.0,120.1 1658.0,117.0 1659.0,118.5 1660.0,120.4 1661.0,121.4 1662.0,118.9 1663.0,120.3 1664.0,116.4 1665.0,116.9 1666.0,116.4 1667.0,122.6 1668.0,119.6 1669.0,121.0 1670.0,117.7 1671.0,119.0 1672.0,120.7 1673.0,113.8 1674.0,114.7 1675.0,119.3 1676.0,128.7 1677.0,124.5 1678.0,120.4 1679.0,123.4 1680.0,127.1 1681.0,120.0 1682.0,119.1 1683.0,124.0 1684.0,122.7 1685.0,122.1 1686.0,119.8 1687.0,127.2 1688.0,127.4 1689.0,123.4 1690.0,121.3 1691.0,119.3 1692.0,120.7 1693.0,120.0 1694.0,121.8 1695.0,122.4 1696.0,118.2 1697.0,114.2 1698.0,119.7 1699.0,117.5 1700.0,118.0 1701.0,117.5 1702.0,117.0 1703.0,112.8 1704.0,123.0 1705.0,122.6 1706.0,125.5 1707.0,127.7 1708.0,120.4 1709.0,113.5 1710.0,115.2 1711.0,115.2 1712.0,117.8 1713.0,118.9 1714.0,113.7 1715.0,119.2 1716.0,115.6 1717.0,120.3 1718.0,123.0 1719.0,119.2 1720.0,119.6 1721.0,122.2 1722.0,116.9 1723.0,146.8 1724.0,152.9 1725.0,160.4 1726.0,161.6 1727.0,158.9 1728.0,155.2 1729.0,151.3 1730.0,156.5 1731.0,152.6 1732.0,151.2 1733.0,152.8 1734.0,156.7 1735.0,149.6 1736.0,149.6 1737.0,146.6 1738.0,149.9 1739.0,157.7 1740.0,151.1 1741.0,149.2 1742.0,151.6 1743.0,151.3 1744.0,145.5 1745.0,150.1 1746.0,151.7 1747.0,149.9 1748.0,149.6 1749.0,152.7 1750.0,146.2 1751.0,146.7 1752.0,146.1 1753.0,150.1 1754.0,140.2 1755.0,142.2 1756.0,144.0 1757.0,147.8 1758.0,148.7 1759.0,149.1 1760.0,140.6 1761.0,148.2 1762.0,143.1 1763.0,141.6 1764.0,144.2 1765.0,139.0 1766.0,134.8 1767.0,138.9 1768.0,136.4 1769.0,138.9 1770.0,142.6 1771.0,143.6 1772.0,146.5 1773.0,140.0 1774.0,134.4 1775.0,135.8 1776.0,135.2 1777.0,134.8 1778.0,139.3 1779.0,135.4 1780.0,131.6 1781.0,139.0 1782.0,138.0 1783.0,138.6 1784.0,138.0 1785.0,144.8 1786.0,137.7 1787.0,140.5 1788.0,143.0 1789.0,137.2 1790.0,135.6 1791.0,129.7 1792.0,132.5 1793.0,133.0 1794.0,133.2 1795.0,129.7 1796.0,137.6 1797.0,133.0 1798.0,126.8 1799.0,124.8 1800.0,129.2 1801.0,130.0 1802.0,128.1 1803.0,129.6 1804.0,128.1 1805.0,130.5 1806.0,127.0 1807.0,128.8 1808.0,133.4 1809.0,136.8 1810.0,125.5 1811.0,124.4 1812.0,124.1 1813.0,127.8 1814.0,122.3 1815.0,123.2 1816.0,124.2 1817.0,120.9 1818.0,120.3 1819.0,120.5 1820.0,115.2 1821.0,116.7 1822.0,120.7 1823.0,122.7 1824.0,120.4 1825.0,115.2 1826.0,119.1 1827.0,123.8 1828.0,122.9 1829.0,120.3" fill="none" stroke="#e4e4e4" stroke-width="1.5" stroke-linejoin="round"/><line x1="1405.4" y1="0" x2="1405.4" y2="223.5" stroke="#e8e84a" stroke-width="1.3"/><line x1="981" y1="0" x2="981" y2="224.5" stroke="#d04a3a" stroke-width="2.2"/></svg>
<div class="t" style="left:927.30px;top:-10px;font-size:20px;line-height:23px;color:#fff;">40.0</div>
<div class="t" style="left:927.30px;top:34px;font-size:20px;line-height:23px;color:#fff;">20.0</div>
<div class="t" style="left:938.40px;top:79px;font-size:20px;line-height:23px;color:#fff;">0.0</div>
<div class="t" style="left:920.60px;top:124px;font-size:20px;line-height:23px;color:#fff;">-20.0</div>
<div class="t" style="left:920.60px;top:168px;font-size:20px;line-height:23px;color:#fff;">-40.0</div>
<div class="t" style="left:920.60px;top:213px;font-size:20px;line-height:23px;color:#fff;">-60.0</div>
<div class="t" style="left:1022.42px;top:230px;font-size:19.5px;line-height:22px;color:#fff;">221.2</div>
<div class="t" style="left:1105.13px;top:230px;font-size:19.5px;line-height:22px;color:#fff;">221.4</div>
<div class="t" style="left:1188.13px;top:230px;font-size:19.5px;line-height:22px;color:#fff;">221.6</div>
<div class="t" style="left:1271.03px;top:230px;font-size:19.5px;line-height:22px;color:#fff;">221.8</div>
<div class="t" style="left:1362.17px;top:230px;font-size:19.5px;line-height:22px;color:#fff;">222</div>
<div class="t" style="left:1436.92px;top:230px;font-size:19.5px;line-height:22px;color:#fff;">222.2</div>
<div class="t" style="left:1519.63px;top:230px;font-size:19.5px;line-height:22px;color:#fff;">222.4</div>
<div class="t" style="left:1602.63px;top:230px;font-size:19.5px;line-height:22px;color:#fff;">222.6</div>
<div class="t" style="left:1685.53px;top:230px;font-size:19.5px;line-height:22px;color:#fff;">222.8</div>
<div class="t" style="left:1776.57px;top:230px;font-size:19.5px;line-height:22px;color:#fff;">223</div>
<div class="t" style="left:1312.60px;top:260px;font-size:22.5px;line-height:26px;color:#fff;transform:scaleX(1.0572);">Frequency (MHz)</div>
<div class="t" style="left:877.5px;top:112.6px;font-size:23.8px;line-height:23.8px;color:#fff;transform:translate(-50%,-50%) rotate(-90deg);transform-origin:50% 50%">Magnitude (dB)</div>
<div class="t" style="left:15.20px;top:327px;font-size:23.6px;line-height:27px;color:#fff;font-style:italic;transform:scaleX(0.9824);">DAB+</div>
<div class="r" style="left:100px;top:321px;width:90.5px;height:33px;border:1.6px solid #8c8c8c;border-radius:4px;box-sizing:border-box"></div>
<div class="t" style="left:103.10px;top:325px;font-size:20.5px;line-height:24px;color:#fff;transform:scaleX(0.9726);">11D</div>
<svg class="s" style="left:157px;top:333px" width="15.599999999999994" height="8.5" viewBox="0 0 15.599999999999994 8.5"><polygon points="0,0 15.599999999999994,0 7.799999999999997,8.5" fill="#fff"/></svg>
<div class="r" style="left:205px;top:306px;width:1px;height:58px;background:#e0e0e0;"></div>
<div class="r" style="left:206px;top:306px;width:146px;height:58px;background:#b31616;"></div>
<div class="t" style="left:228.76px;top:324px;font-size:23.5px;line-height:27px;color:#ff6e6e;transform:scaleX(0.9764);">EId: 114D</div>
<div class="t" style="left:358.01px;top:324px;font-size:24px;line-height:28px;color:#eded2a;transform:scaleX(0.9834);">Flensburg K11D</div>
<div class="t" style="left:555.59px;top:324px;font-size:24px;line-height:28px;color:#fff;transform:scaleX(1.0061);">2024-03-07</div>
<div class="t" style="left:691.35px;top:324px;font-size:24px;line-height:28px;color:#fff;transform:scaleX(0.9557);">21:40:25 Z</div>
<div class="r" style="left:826px;top:306px;width:4px;height:58px;background:#f0f0f0;"></div>
<div class="r" style="left:845.4px;top:321px;width:37.200000000000045px;height:32.60000000000002px;border:1.6px solid #8c8c8c;border-radius:4px;box-sizing:border-box"></div>
<svg class="s" style="left:856px;top:333px" width="15" height="8.5" viewBox="0 0 15 8.5"><polygon points="0,0 15,0 7.5,8.5" fill="#fff"/></svg>
<div class="r" style="left:918.2px;top:320.8px;width:34.4px;height:34.4px;border-radius:50%;background:#2064a0;"></div>
<div class="r" style="left:929.0px;top:331.6px;width:12.8px;height:12.8px;border-radius:50%;background:#ff0000;"></div>
<div class="r" style="left:970.8px;top:320.8px;width:34.4px;height:34.4px;border-radius:50%;background:#1a3e60;"></div>
<div class="r" style="left:981px;top:331px;width:14px;height:15px;background:#171717;"></div>
<div class="t" style="left:1047.42px;top:325px;font-size:24px;line-height:28px;color:#fff;transform:scaleX(0.9070);">SId: 16E1</div>
<div class="t" style="left:1189.82px;top:313px;font-size:36.5px;line-height:42px;color:#ffff14;transform:scaleX(0.9590);">Westküste FM</div>
<div class="t" style="left:1456.72px;top:325px;font-size:24px;line-height:28px;color:#fff;transform:scaleX(0.9868);">72 kbps</div>
<div class="t" style="left:1553.88px;top:325px;font-size:24px;line-height:28px;color:#fff;transform:scaleX(0.8969);">EEP 3-A</div>
<svg class="s" style="left:1680px;top:312px" width="40" height="50" viewBox="0 0 40 50"><path d="M6.9 16.6H16.6V33.4H6.9Z M16.6 16.6L29.8 7V42.6L16.6 33.4" fill="none" stroke="#f0f0f0" stroke-width="2.3" stroke-linejoin="miter"/></svg>
<div class="r" style="left:1797.7px;top:319.7px;width:97.29999999999995px;height:31.69999999999999px;border:1.6px solid #8c8c8c;border-radius:4px;box-sizing:border-box"></div>
<div class="t" style="left:1798.70px;top:323px;font-size:19.5px;line-height:22px;color:#fff;transform:scaleX(0.9644);">DAB</div>
<svg class="s" style="left:1854.5px;top:330.5px" width="15.0" height="8.0" viewBox="0 0 15.0 8.0"><polygon points="0,0 15.0,0 7.5,8.0" fill="#fff"/></svg>
<div class="t" style="left:9.96px;top:374px;font-size:29.5px;line-height:34px;color:#ffff14;transform:scaleX(0.9811);">Westküste FM</div>
<div class="r" style="left:2px;top:912px;width:229px;height:40px;background:#1f6aa2;border:1.5px solid #3d96d8;box-sizing:border-box"></div>
<div class="r" style="left:4.5px;top:914.5px;width:224px;height:40px;border:1.5px dotted #061a2c;box-sizing:border-box"></div>
<div class="t" style="left:9.80px;top:426px;font-size:24px;line-height:28px;color:#fff;transform:scaleX(0.9015);">ANTENNE-SYLT</div>
<div class="t" style="left:8.08px;top:464px;font-size:24px;line-height:28px;color:#fff;transform:scaleX(0.8966);">BOLLERWAGEN</div>
<div class="t" style="left:8.82px;top:502px;font-size:24px;line-height:28px;color:#fff;transform:scaleX(1.0194);">delta radio</div>
<div class="t" style="left:8.12px;top:539px;font-size:24px;line-height:28px;color:#fff;transform:scaleX(0.8754);">NORDSEEWELLE</div>
<div class="t" style="left:8.80px;top:577px;font-size:24px;line-height:28px;color:#fff;transform:scaleX(0.9302);">OLDIE ANTENNE</div>
<div class="t" style="left:8.89px;top:615px;font-size:24px;line-height:28px;color:#fff;transform:scaleX(0.8414);">OSTSEEWELLE FL</div>
<div class="t" style="left:8.08px;top:653px;font-size:24px;line-height:28px;color:#fff;transform:scaleX(0.8951);">R.SH</div>
<div class="t" style="left:7.94px;top:691px;font-size:24px;line-height:28px;color:#fff;transform:scaleX(0.9663);">RADIO 21 SH-N</div>
<div class="t" style="left:8.00px;top:729px;font-size:24px;line-height:28px;color:#fff;transform:scaleX(0.9366);">RADIO BOB! SH</div>
<div class="t" style="left:8.08px;top:766px;font-size:24px;line-height:28px;color:#fff;transform:scaleX(0.8958);">RADIO FLENSBURG</div>
<div class="t" style="left:7.87px;top:804px;font-size:24px;line-height:28px;color:#fff;transform:scaleX(1.0058);">Radio Hamburg</div>
<div class="t" style="left:8.00px;top:842px;font-size:24px;line-height:28px;color:#fff;transform:scaleX(0.9383);">ROCK ANTENNE HH</div>
<div class="t" style="left:8.76px;top:880px;font-size:24px;line-height:28px;color:#fff;transform:scaleX(0.9629);">-WellenrauschRWR</div>
<div class="t" style="left:9.68px;top:918px;font-size:24px;line-height:28px;color:#fff;transform:scaleX(0.9712);">Westküste FM</div>
<div class="t" style="left:306.99px;top:374px;font-size:29.5px;line-height:34px;color:#fff;transform:scaleX(0.9850);">Service Quality</div>
<div class="t" style="left:314.63px;top:440px;font-size:22.6px;line-height:26px;color:#fff;transform:scaleX(0.8595);">SNR (dB)</div>
<div class="r" style="left:495px;top:432.6px;width:60px;height:37.19999999999999px;background:#888888;"></div>
<div class="r" style="left:495px;top:432.6px;width:13.699999999999989px;height:37.19999999999999px;background:#ff0000;"></div>
<div class="t" style="left:512.10px;top:442px;font-size:18.5px;line-height:21px;color:#fff;">8,3</div>
<div class="t" style="left:313.92px;top:487px;font-size:22.6px;line-height:26px;color:#fff;transform:scaleX(0.8754);">FIC (ok %)</div>
<div class="r" style="left:495px;top:479.2px;width:60px;height:37.19999999999999px;background:#888888;"></div>
<div class="r" style="left:495px;top:479.2px;width:60px;height:37.19999999999999px;background:#008000;"></div>
<div class="t" style="left:509.23px;top:489px;font-size:18.5px;line-height:21px;color:#fff;">100</div>
<div class="t" style="left:313.91px;top:533px;font-size:22.6px;line-height:26px;color:#fff;transform:scaleX(0.8809);">RS (ok %)</div>
<div class="r" style="left:495px;top:525.8px;width:60px;height:37.200000000000045px;background:#888888;"></div>
<div class="r" style="left:495px;top:525.8px;width:2.5px;height:37.200000000000045px;background:#c01818;"></div>
<div class="t" style="left:519.96px;top:535px;font-size:18.5px;line-height:21px;color:#fff;">4</div>
<div class="t" style="left:313.79px;top:579px;font-size:22.6px;line-height:26px;color:#fff;transform:scaleX(0.9446);">Null Symbol</div>
<div class="r" style="left:495px;top:571.8px;width:60px;height:37.200000000000045px;background:#888888;"></div>
<div class="r" style="left:495px;top:571.8px;width:60px;height:37.200000000000045px;background:#008000;"></div>
<div class="t" style="left:314.58px;top:625px;font-size:22.6px;line-height:26px;color:#fff;transform:scaleX(0.9091);">SymbolTime (ms)</div>
<div class="r" style="left:495px;top:617.7px;width:60px;height:37.19999999999993px;background:#888888;"></div>
<div class="r" style="left:495px;top:617.7px;width:17.700000000000045px;height:37.19999999999993px;background:#008000;"></div>
<div class="t" style="left:507.01px;top:627px;font-size:18.5px;line-height:21px;color:#fff;">0,45</div>
<div class="t" style="left:313.87px;top:671px;font-size:22.6px;line-height:26px;color:#fff;transform:scaleX(0.9015);">FrameTime (ms)</div>
<div class="r" style="left:495px;top:663.8px;width:60px;height:37.200000000000045px;background:#888888;"></div>
<div class="r" style="left:495px;top:663.8px;width:37.89999999999998px;height:37.200000000000045px;background:#008000;"></div>
<div class="t" style="left:507.01px;top:673px;font-size:18.5px;line-height:21px;color:#fff;">96,1</div>
<div class="r" style="left:588px;top:377px;width:178.5px;height:41px;background:#868686;border:1px solid #a0a0a0;border-bottom:none;box-sizing:border-box;border-radius:4px 13px 0 0"></div>
<div class="r" style="left:767.5px;top:377px;width:207.5px;height:41px;background:#868686;border:1px solid #a0a0a0;border-bottom:none;box-sizing:border-box;border-radius:4px 0px 0 0"></div>
<div class="r" style="left:588px;top:426px;width:136px;height:41px;background:#868686;border:1px solid #a0a0a0;border-bottom:none;box-sizing:border-box;border-radius:4px 13px 0 0"></div>
<div class="r" style="left:724.5px;top:426px;width:110.0px;height:42px;background:#1b5889;border:1px solid #6a8fb0;border-bottom:none;box-sizing:border-box;border-radius:4px 13px 0 0"></div>
<div class="r" style="left:835px;top:426px;width:140px;height:41px;background:#868686;border:1px solid #a0a0a0;border-bottom:none;box-sizing:border-box;border-radius:4px 0px 0 0"></div>
<div class="t" style="left:653.30px;top:386px;font-size:25.5px;line-height:29px;color:#d8d8d8;transform:scaleX(0.9377);">AAC</div>
<div class="t" style="left:831.82px;top:386px;font-size:25.5px;line-height:29px;color:#d8d8d8;transform:scaleX(1.0256);">Options</div>
<div class="t" style="left:629.94px;top:434px;font-size:25.5px;line-height:29px;color:#d8d8d8;transform:scaleX(0.9281);">Sync</div>
<div class="t" style="left:766.11px;top:434px;font-size:25.5px;line-height:29px;color:#fff;transform:scaleX(0.9627);">TII</div>
<div class="t" style="left:877.60px;top:434px;font-size:25.5px;line-height:29px;color:#d8d8d8;transform:scaleX(1.0432);">Audio</div>
<div class="r" style="left:628.3px;top:481.6px;width:14.0px;height:14.0px;border-radius:50%;background:#ff0000;"></div>
<div class="r" style="left:672px;top:481px;width:13px;height:15px;background:#0e2a4a;"></div>
<div class="r" style="left:599px;top:509.8px;width:371px;height:2.0px;background:#aab4c0;"></div>
<div class="t" style="left:597.50px;top:539px;font-size:22.5px;line-height:26px;color:#fff;">Pattern</div>
<div class="t" style="left:697.89px;top:539px;font-size:22.5px;line-height:26px;color:#fff;transform:scaleX(1.0586);">MainId</div>
<div class="t" style="left:797.89px;top:539px;font-size:22.5px;line-height:26px;color:#fff;transform:scaleX(0.9938);">SubId</div>
<div class="t" style="left:884.87px;top:539px;font-size:22.5px;line-height:26px;color:#fff;transform:scaleX(1.0160);">Strength</div>
<div class="r" style="left:599px;top:564.2px;width:371px;height:1.599999999999909px;background:#a9b3bf;"></div>
<div class="t" style="left:600.57px;top:584px;font-size:20.5px;line-height:24px;color:#fff;transform:scaleX(1.0177);">0x96</div>
<div class="t" style="left:701.50px;top:584px;font-size:20.5px;line-height:24px;color:#fff;transform:scaleX(0.9663);">41</div>
<div class="t" style="left:801.62px;top:584px;font-size:20.5px;line-height:24px;color:#fff;transform:scaleX(0.9551);">5</div>
<div class="t" style="left:887.58px;top:584px;font-size:20.5px;line-height:24px;color:#fff;transform:scaleX(0.9964);">0.84</div>
<div class="t" style="left:1278.93px;top:367px;font-size:24px;line-height:28px;color:#fff;transform:scaleX(0.8917);">Channel Impulse Response (CIR)</div>
<svg class="s" style="left:1840px;top:370px" width="42" height="22" viewBox="0 0 42 22"><polygon points="2.5,2.5 20,2.5 11.25,18.5" fill="none" stroke="#dfe6ee" stroke-width="1.3"/><path d="M30.5 2.5L48 19.5M30.5 19.5L48 2.5" stroke="#e0601c" stroke-width="3.4"/></svg>
<div class="r" style="left:997.9px;top:413.4px;width:19.2px;height:19.2px;border-radius:50%;background:#e0e0e0;"></div>
<div class="t" style="left:1022.46px;top:414px;font-size:18.5px;line-height:21px;color:#fff;transform:scaleX(0.9054);">Freeze</div>
<div class="r" style="left:1104.4px;top:413.4px;width:19.2px;height:19.2px;border-radius:50%;background:#e0e0e0;"></div>
<div class="t" style="left:1129.91px;top:414px;font-size:18.5px;line-height:21px;color:#fff;transform:scaleX(0.9610);">Gradient</div>
<div class="t" style="left:1004.89px;top:475px;font-size:18.3px;line-height:21px;color:#fff;transform:scaleX(0.9819);">Smoothing Level</div>
<svg class="s" style="left:998px;top:504px;" width="220" height="6" viewBox="0 0 220 6"><rect x="9.25" y="0" width="1.6" height="6" fill="#bdbdbd"/><rect x="28.93" y="0" width="1.6" height="6" fill="#bdbdbd"/><rect x="48.61" y="0" width="1.6" height="6" fill="#bdbdbd"/><rect x="68.29" y="0" width="1.6" height="6" fill="#bdbdbd"/><rect x="87.97" y="0" width="1.6" height="6" fill="#bdbdbd"/><rect x="107.65" y="0" width="1.6" height="6" fill="#bdbdbd"/><rect x="127.33" y="0" width="1.6" height="6" fill="#bdbdbd"/><rect x="147.01" y="0" width="1.6" height="6" fill="#bdbdbd"/><rect x="166.69" y="0" width="1.6" height="6" fill="#bdbdbd"/><rect x="186.37" y="0" width="1.6" height="6" fill="#bdbdbd"/><rect x="206.05" y="0" width="1.6" height="6" fill="#bdbdbd"/></svg>
<div class="r" style="left:998.3px;top:519.0px;width:216.10000000000014px;height:3.3px;border-radius:2px;background:#e6e6e6"></div>
<div class="r" style="left:1018.1px;top:511.1px;width:19.0px;height:19.0px;border-radius:50%;background:linear-gradient(#f4f4f4,#a8a8a8 55%,#6c6c6c);box-shadow:0 0 2px 1px rgba(0,0,0,.45)"></div>
<div class="t" style="left:1004.97px;top:556px;font-size:18.3px;line-height:21px;color:#fff;transform:scaleX(0.9741);">Zoom X</div>
<div class="r" style="left:998.3px;top:593.9px;width:216.10000000000014px;height:3.3px;border-radius:2px;background:#e6e6e6"></div>
<div class="r" style="left:999.0px;top:586.0px;width:19.0px;height:19.0px;border-radius:50%;background:linear-gradient(#f4f4f4,#a8a8a8 55%,#6c6c6c);box-shadow:0 0 2px 1px rgba(0,0,0,.45)"></div>
<div class="t" style="left:1004.98px;top:631px;font-size:18.3px;line-height:21px;color:#fff;transform:scaleX(0.9559);">Zoom Y</div>
<div class="r" style="left:998.3px;top:668.6px;width:216.10000000000014px;height:3.3px;border-radius:2px;background:#e6e6e6"></div>
<div class="r" style="left:998.9px;top:660.7px;width:19.0px;height:19.0px;border-radius:50%;background:linear-gradient(#f4f4f4,#a8a8a8 55%,#6c6c6c);box-shadow:0 0 2px 1px rgba(0,0,0,.45)"></div>
<div class="t" style="left:1005.33px;top:707px;font-size:18.3px;line-height:21px;color:#fff;transform:scaleX(0.9499);">x-Axis</div>
<div class="r" style="left:1014.7px;top:737.3px;width:16.6px;height:16.6px;border-radius:50%;background:#f8f8f8;border:1.5px solid #d0d0d0;box-sizing:border-box;"></div>
<div class="r" style="left:1014.7px;top:767.3px;width:16.6px;height:16.6px;border-radius:50%;background:#f4f4f4;border:1.5px solid #cfcfcf;box-sizing:border-box;"></div>
<div class="r" style="left:1019.0px;top:771.6px;width:8.0px;height:8.0px;border-radius:50%;background:#2a2a2a"></div>
<div class="r" style="left:1014.7px;top:797.3px;width:16.6px;height:16.6px;border-radius:50%;background:#f8f8f8;border:1.5px solid #d0d0d0;box-sizing:border-box;"></div>
<div class="t" style="left:1040.54px;top:736px;font-size:18.3px;line-height:21px;color:#fff;transform:scaleX(0.9280);">Samples</div>
<div class="t" style="left:1039.88px;top:766px;font-size:18.3px;line-height:21px;color:#fff;transform:scaleX(0.9681);">Distance</div>
<div class="t" style="left:1040.94px;top:796px;font-size:18.3px;line-height:21px;color:#fff;transform:scaleX(0.9717);">Time</div>
<div class="r" style="left:1230px;top:396px;width:1px;height:477px;background:#262626;"></div>
<svg class="s" style="left:0;top:0" width="1882" height="946" viewBox="0 0 1882 946"><rect x="1357" y="425" width="120.4" height="354.5" fill="#404040"/><line x1="1357" y1="425.0" x2="1845" y2="425.0" stroke="#989898" stroke-width="1"/><line x1="1357" y1="495.9" x2="1845" y2="495.9" stroke="#989898" stroke-width="1"/><line x1="1357" y1="566.8" x2="1845" y2="566.8" stroke="#989898" stroke-width="1"/><line x1="1357" y1="637.7" x2="1845" y2="637.7" stroke="#989898" stroke-width="1"/><line x1="1357" y1="708.6" x2="1845" y2="708.6" stroke="#989898" stroke-width="1"/><line x1="1357" y1="779.5" x2="1845" y2="779.5" stroke="#989898" stroke-width="1"/><line x1="1379.5" y1="425" x2="1379.5" y2="779.5" stroke="#989898" stroke-width="1"/><line x1="1412.1" y1="425" x2="1412.1" y2="779.5" stroke="#989898" stroke-width="1"/><line x1="1444.8" y1="425" x2="1444.8" y2="779.5" stroke="#989898" stroke-width="1"/><line x1="1510.1" y1="425" x2="1510.1" y2="779.5" stroke="#989898" stroke-width="1"/><line x1="1542.7" y1="425" x2="1542.7" y2="779.5" stroke="#989898" stroke-width="1"/><line x1="1575.4" y1="425" x2="1575.4" y2="779.5" stroke="#989898" stroke-width="1"/><line x1="1608.0" y1="425" x2="1608.0" y2="779.5" stroke="#989898" stroke-width="1"/><line x1="1640.7" y1="425" x2="1640.7" y2="779.5" stroke="#989898" stroke-width="1"/><line x1="1673.3" y1="425" x2="1673.3" y2="779.5" stroke="#989898" stroke-width="1"/><line x1="1706.0" y1="425" x2="1706.0" y2="779.5" stroke="#989898" stroke-width="1"/><line x1="1738.6" y1="425" x2="1738.6" y2="779.5" stroke="#989898" stroke-width="1"/><line x1="1771.2" y1="425" x2="1771.2" y2="779.5" stroke="#989898" stroke-width="1"/><line x1="1803.9" y1="425" x2="1803.9" y2="779.5" stroke="#989898" stroke-width="1"/><line x1="1836.6" y1="425" x2="1836.6" y2="779.5" stroke="#989898" stroke-width="1"/><line x1="1845" y1="425" x2="1845" y2="779.5" stroke="#9a9a9a" stroke-width="1.5"/><polyline points="1358.0,673.5 1358.5,626.6 1359.0,698.1 1359.5,645.1 1360.0,664.1 1360.5,692.2 1361.0,643.7 1361.5,671.6 1362.0,696.3 1362.5,677.0 1363.0,650.5 1363.5,645.1 1364.0,678.4 1364.5,661.3 1364.9,654.9 1365.4,682.9 1365.9,645.2 1366.4,670.3 1366.9,680.6 1367.4,679.7 1367.9,668.2 1368.4,669.0 1368.9,681.2 1369.4,678.4 1369.9,646.7 1370.4,665.2 1370.9,651.4 1371.4,624.9 1371.9,657.5 1372.4,624.9 1372.9,686.6 1373.4,653.0 1373.9,676.1 1374.4,631.4 1374.9,634.6 1375.4,709.8 1375.9,689.5 1376.4,655.9 1376.9,653.4 1377.4,654.5 1377.9,721.2 1378.4,660.2 1378.8,656.2 1379.3,671.2 1379.8,648.5 1380.3,765.3 1380.8,656.6 1381.3,690.9 1381.8,649.9 1382.3,674.3 1382.8,687.9 1383.3,661.9 1383.8,688.3 1384.3,688.4 1384.8,701.8 1385.3,670.2 1385.8,659.4 1386.3,648.6 1386.8,672.5 1387.3,648.1 1387.8,669.2 1388.3,671.5 1388.8,657.8 1389.3,647.8 1389.8,676.6 1390.3,674.6 1390.8,672.9 1391.3,667.9 1391.8,688.1 1392.3,692.8 1392.7,677.8 1393.2,660.1 1393.7,686.6 1394.2,662.2 1394.7,661.6 1395.2,678.3 1395.7,628.1 1396.2,634.4 1396.7,633.1 1397.2,649.9 1397.7,683.2 1398.2,677.5 1398.7,660.6 1399.2,668.3 1399.7,668.6 1400.2,675.5 1400.7,706.8 1401.2,698.0 1401.7,715.2 1402.2,662.0 1402.7,684.5 1403.2,684.3 1403.7,674.1 1404.2,664.0 1404.7,699.0 1405.2,738.7 1405.7,691.5 1406.2,711.6 1406.6,689.5 1407.1,636.9 1407.6,691.3 1408.1,656.2 1408.6,697.8 1409.1,663.5 1409.6,700.7 1410.1,670.8 1410.6,657.9 1411.1,673.1 1411.6,665.6 1412.1,667.0 1412.6,689.6 1413.1,657.6 1413.6,674.7 1414.1,652.5 1414.6,670.5 1415.1,633.8 1415.6,710.4 1416.1,675.7 1416.6,651.5 1417.1,676.8 1417.6,685.9 1418.1,675.1 1418.6,698.0 1419.1,667.2 1419.6,624.9 1420.1,646.1 1420.5,692.4 1421.0,687.6 1421.5,677.9 1422.0,629.3 1422.5,686.5 1423.0,683.8 1423.5,632.2 1424.0,651.8 1424.5,677.3 1425.0,692.6 1425.5,701.5 1426.0,684.0 1426.5,715.5 1427.0,713.7 1427.5,682.6 1428.0,659.7 1428.5,631.2 1429.0,645.5 1429.5,678.0 1430.0,651.7 1430.5,645.8 1431.0,685.0 1431.5,689.2 1432.0,671.9 1432.5,702.5 1433.0,688.1 1433.5,719.1 1434.0,692.4 1434.4,704.6 1434.9,674.3 1435.4,666.2 1435.9,664.0 1436.4,674.0 1436.9,646.2 1437.4,713.6 1437.9,647.0 1438.4,684.3 1438.9,666.9 1439.4,665.1 1439.9,688.4 1440.4,682.8 1440.9,653.3 1441.4,662.4 1441.9,655.5 1442.4,624.9 1442.9,624.9 1443.4,675.2 1443.9,663.4 1444.4,624.9 1444.9,653.5 1445.4,665.1 1445.9,673.9 1446.4,680.7 1446.9,735.7 1447.4,680.9 1447.9,654.3 1448.3,677.8 1448.8,678.7 1449.3,694.3 1449.8,670.6 1450.3,688.0 1450.8,673.3 1451.3,648.2 1451.8,662.1 1452.3,659.2 1452.8,662.3 1453.3,668.4 1453.8,672.2 1454.3,675.9 1454.8,654.0 1455.3,691.9 1455.8,642.0 1456.3,668.9 1456.8,685.0 1457.3,679.7 1457.8,683.5 1458.3,666.3 1458.8,684.4 1459.3,646.1 1459.8,685.7 1460.3,716.3 1460.8,684.6 1461.3,710.9 1461.8,670.4 1462.2,647.8 1462.7,656.3 1463.2,697.1 1463.7,685.3 1464.2,633.0 1464.7,663.1 1465.2,669.5 1465.7,647.9 1466.2,624.9 1466.7,642.9 1467.2,666.7 1467.7,662.3 1468.2,656.9 1468.7,682.2 1469.2,691.4 1469.7,668.5 1470.2,689.1 1470.7,670.9 1471.2,667.6 1471.7,624.9 1472.2,687.1 1472.7,672.1 1473.2,673.0 1473.7,660.6 1474.2,648.1 1474.7,679.7 1475.2,686.5 1475.7,703.3 1476.1,593.2 1476.6,583.6 1477.1,582.7 1477.6,495.9 1478.1,589.0 1478.6,578.6 1479.1,579.3 1479.6,592.7 1480.1,569.8 1480.6,597.8 1481.1,600.6 1481.6,587.6 1482.1,598.9 1482.6,591.4 1483.1,618.4 1483.6,621.1 1484.1,598.7 1484.6,616.1 1485.1,598.7 1485.6,627.9 1486.1,630.2 1486.6,606.2 1487.1,630.2 1487.6,643.5 1488.1,637.7 1488.6,656.4 1489.1,718.6 1489.6,679.8 1490.0,650.6 1490.5,645.5 1491.0,646.2 1491.5,641.0 1492.0,672.6 1492.5,673.2 1493.0,652.6 1493.5,697.7 1494.0,640.5 1494.5,680.5 1495.0,677.2 1495.5,705.4 1496.0,687.9 1496.5,670.0 1497.0,651.3 1497.5,649.2 1498.0,671.3 1498.5,673.5 1499.0,686.7 1499.5,661.3 1500.0,674.7 1500.5,633.8 1501.0,687.2 1501.5,670.3 1502.0,700.4 1502.5,736.2 1503.0,699.6 1503.5,694.2 1503.9,642.8 1504.4,664.9 1504.9,700.9 1505.4,656.2 1505.9,643.7 1506.4,677.0 1506.9,683.5 1507.4,676.5 1507.9,663.8 1508.4,656.4 1508.9,645.3 1509.4,644.7 1509.9,645.2 1510.4,624.9 1510.9,637.9 1511.4,701.1 1511.9,672.3 1512.4,663.2 1512.9,677.5 1513.4,650.9 1513.9,677.0 1514.4,688.6 1514.9,639.9 1515.4,655.9 1515.9,665.1 1516.4,650.6 1516.9,647.8 1517.4,662.6 1517.8,704.5 1518.3,683.5 1518.8,679.0 1519.3,689.8 1519.8,707.3 1520.3,645.1 1520.8,679.6 1521.3,692.9 1521.8,627.9 1522.3,678.9 1522.8,695.0 1523.3,664.7 1523.8,660.9 1524.3,684.1 1524.8,715.6 1525.3,679.6 1525.8,688.6 1526.3,665.9 1526.8,653.8 1527.3,682.6 1527.8,662.8 1528.3,671.5 1528.8,624.9 1529.3,684.2 1529.8,641.1 1530.3,670.7 1530.8,672.2 1531.3,654.8 1531.7,651.2 1532.2,643.6 1532.7,662.8 1533.2,681.9 1533.7,680.7 1534.2,659.1 1534.7,657.7 1535.2,640.9 1535.7,661.0 1536.2,647.8 1536.7,638.4 1537.2,687.8 1537.7,700.1 1538.2,693.9 1538.7,699.2 1539.2,636.9 1539.7,687.0 1540.2,644.3 1540.7,657.6 1541.2,634.3 1541.7,649.0 1542.2,671.7 1542.7,673.7 1543.2,667.9 1543.7,666.0 1544.2,680.5 1544.7,670.3 1545.2,636.5 1545.6,726.7 1546.1,664.3 1546.6,688.3 1547.1,665.8 1547.6,652.3 1548.1,670.8 1548.6,626.8 1549.1,702.3 1549.6,646.8 1550.1,682.0 1550.6,656.8 1551.1,665.9 1551.6,722.8 1552.1,685.2 1552.6,665.1 1553.1,637.7 1553.6,663.7 1554.1,664.3 1554.6,745.7 1555.1,640.2 1555.6,632.4 1556.1,669.0 1556.6,674.1 1557.1,702.9 1557.6,651.4 1558.1,624.9 1558.6,654.9 1559.1,643.6 1559.5,658.5 1560.0,725.9 1560.5,642.1 1561.0,695.0 1561.5,673.9 1562.0,663.9 1562.5,651.5 1563.0,702.3 1563.5,661.7 1564.0,685.3 1564.5,696.1 1565.0,668.3 1565.5,684.2 1566.0,696.5 1566.5,670.0 1567.0,664.3 1567.5,707.7 1568.0,697.3 1568.5,703.2 1569.0,665.9 1569.5,661.2 1570.0,628.3 1570.5,700.4 1571.0,661.9 1571.5,650.8 1572.0,722.0 1572.5,676.3 1573.0,634.5 1573.4,676.6 1573.9,693.4 1574.4,696.7 1574.9,662.7 1575.4,663.3 1575.9,697.8 1576.4,689.9 1576.9,658.6 1577.4,640.5 1577.9,682.8 1578.4,656.8 1578.9,657.8 1579.4,706.3 1579.9,676.0 1580.4,661.1 1580.9,681.4 1581.4,713.6 1581.9,698.9 1582.4,654.1 1582.9,637.1 1583.4,714.6 1583.9,624.9 1584.4,667.7 1584.9,649.9 1585.4,644.2 1585.9,649.4 1586.4,666.5 1586.9,693.5 1587.3,656.7 1587.8,684.3 1588.3,721.5 1588.8,624.9 1589.3,655.0 1589.8,632.2 1590.3,688.3 1590.8,639.4 1591.3,636.9 1591.8,637.6 1592.3,670.0 1592.8,694.3 1593.3,673.3 1593.8,714.9 1594.3,704.6 1594.8,667.7 1595.3,667.7 1595.8,673.0 1596.3,671.8 1596.8,629.9 1597.3,642.9 1597.8,642.9 1598.3,644.7 1598.8,685.6 1599.3,676.5 1599.8,650.9 1600.3,695.1 1600.8,675.3 1601.2,696.8 1601.7,667.2 1602.2,636.0 1602.7,685.1 1603.2,665.0 1603.7,688.1 1604.2,693.2 1604.7,670.5 1605.2,639.7 1605.7,624.9 1606.2,659.7 1606.7,684.3 1607.2,655.1 1607.7,676.5 1608.2,653.1 1608.7,663.6 1609.2,663.9 1609.7,657.1 1610.2,681.5 1610.7,677.9 1611.2,705.0 1611.7,678.7 1612.2,698.8 1612.7,672.6 1613.2,689.3 1613.7,667.5 1614.2,660.3 1614.7,698.8 1615.1,686.3 1615.6,689.0 1616.1,654.3 1616.6,634.5 1617.1,722.2 1617.6,676.8 1618.1,639.5 1618.6,700.7 1619.1,693.7 1619.6,683.1 1620.1,726.8 1620.6,624.9 1621.1,637.2 1621.6,690.8 1622.1,666.1 1622.6,674.0 1623.1,667.5 1623.6,700.1 1624.1,683.6 1624.6,660.0 1625.1,665.0 1625.6,644.9 1626.1,668.0 1626.6,624.9 1627.1,684.3 1627.6,664.3 1628.1,709.0 1628.6,695.4 1629.0,642.3 1629.5,689.0 1630.0,658.7 1630.5,670.9 1631.0,717.3 1631.5,676.8 1632.0,680.2 1632.5,679.6 1633.0,654.1 1633.5,656.2 1634.0,681.5 1634.5,688.3 1635.0,663.8 1635.5,671.7 1636.0,648.5 1636.5,624.9 1637.0,632.8 1637.5,728.2 1638.0,673.1 1638.5,687.2 1639.0,665.9 1639.5,690.2 1640.0,677.7 1640.5,678.4 1641.0,627.2 1641.5,677.8 1642.0,673.7 1642.5,694.7 1642.9,635.8 1643.4,659.2 1643.9,632.8 1644.4,653.2 1644.9,639.0 1645.4,674.7 1645.9,654.9 1646.4,624.9 1646.9,742.5 1647.4,645.4 1647.9,634.7 1648.4,660.9 1648.9,653.9 1649.4,643.3 1649.9,683.4 1650.4,661.0 1650.9,687.9 1651.4,683.8 1651.9,682.6 1652.4,672.6 1652.9,666.5 1653.4,660.1 1653.9,699.4 1654.4,627.9 1654.9,645.3 1655.4,709.7 1655.9,677.1 1656.4,671.5 1656.8,658.1 1657.3,660.9 1657.8,705.0 1658.3,654.0 1658.8,624.9 1659.3,708.5 1659.8,648.6 1660.3,661.8 1660.8,672.0 1661.3,640.7 1661.8,694.6 1662.3,666.2 1662.8,638.7 1663.3,673.8 1663.8,678.4 1664.3,667.2 1664.8,679.0 1665.3,636.9 1665.8,688.8 1666.3,651.2 1666.8,696.1 1667.3,655.5 1667.8,671.8 1668.3,724.2 1668.8,669.7 1669.3,692.2 1669.8,679.0 1670.3,637.1 1670.7,693.2 1671.2,692.0 1671.7,639.2 1672.2,667.2 1672.7,637.0 1673.2,662.8 1673.7,688.3 1674.2,671.0 1674.7,643.6 1675.2,649.7 1675.7,669.6 1676.2,668.6 1676.7,672.0 1677.2,681.8 1677.7,628.8 1678.2,669.5 1678.7,693.5 1679.2,679.7 1679.7,654.2 1680.2,656.0 1680.7,672.5 1681.2,683.7 1681.7,669.1 1682.2,705.0 1682.7,755.0 1683.2,652.7 1683.7,679.7 1684.2,661.7 1684.6,643.9 1685.1,655.9 1685.6,669.2 1686.1,624.9 1686.6,655.5 1687.1,677.1 1687.6,654.1 1688.1,661.0 1688.6,687.7 1689.1,668.1 1689.6,673.1 1690.1,711.2 1690.6,673.2 1691.1,675.6 1691.6,678.9 1692.1,704.4 1692.6,677.1 1693.1,670.4 1693.6,667.5 1694.1,693.6 1694.6,656.2 1695.1,695.3 1695.6,674.3 1696.1,642.0 1696.6,684.2 1697.1,750.9 1697.6,646.9 1698.1,677.7 1698.5,675.9 1699.0,664.9 1699.5,647.4 1700.0,716.2 1700.5,714.3 1701.0,690.9 1701.5,692.5 1702.0,668.2 1702.5,687.3 1703.0,663.2 1703.5,688.4 1704.0,737.7 1704.5,661.1 1705.0,685.0 1705.5,666.9 1706.0,635.1 1706.5,662.8 1707.0,683.0 1707.5,715.9 1708.0,688.9 1708.5,663.9 1709.0,682.7 1709.5,686.8 1710.0,674.0 1710.5,646.2 1711.0,680.1 1711.5,665.7 1712.0,691.1 1712.4,686.8 1712.9,680.4 1713.4,624.9 1713.9,717.8 1714.4,680.5 1714.9,681.2 1715.4,673.0 1715.9,656.1 1716.4,665.7 1716.9,627.3 1717.4,665.2 1717.9,639.8 1718.4,663.9 1718.9,696.5 1719.4,699.3 1719.9,672.2 1720.4,671.0 1720.9,674.6 1721.4,713.9 1721.9,651.5 1722.4,677.6 1722.9,678.6 1723.4,674.9 1723.9,674.3 1724.4,661.2 1724.9,695.7 1725.4,688.7 1725.9,663.6 1726.3,666.6 1726.8,677.3 1727.3,681.4 1727.8,686.8 1728.3,670.8 1728.8,645.3 1729.3,691.4 1729.8,638.3 1730.3,652.3 1730.8,678.9 1731.3,653.5 1731.8,699.7 1732.3,705.2 1732.8,696.1 1733.3,678.0 1733.8,676.3 1734.3,663.4 1734.8,667.6 1735.3,713.5 1735.8,659.4 1736.3,680.6 1736.8,683.2 1737.3,678.1 1737.8,693.4 1738.3,697.8 1738.8,690.3 1739.3,669.9 1739.8,657.5 1740.2,658.0 1740.7,690.1 1741.2,685.9 1741.7,688.5 1742.2,660.4 1742.7,711.5 1743.2,644.1 1743.7,679.6 1744.2,685.7 1744.7,662.6 1745.2,648.4 1745.7,662.6 1746.2,648.0 1746.7,666.8 1747.2,644.3 1747.7,644.0 1748.2,671.7 1748.7,640.0 1749.2,666.2 1749.7,667.8 1750.2,688.6 1750.7,675.5 1751.2,635.9 1751.7,696.6 1752.2,656.2 1752.7,662.4 1753.2,663.9 1753.7,715.0 1754.1,671.7 1754.6,656.3 1755.1,685.3 1755.6,667.7 1756.1,718.5 1756.6,655.8 1757.1,748.9 1757.6,651.7 1758.1,707.5 1758.6,655.4 1759.1,674.5 1759.6,653.0 1760.1,688.6 1760.6,682.3 1761.1,670.8 1761.6,686.7 1762.1,684.1 1762.6,675.3 1763.1,690.6 1763.6,645.1 1764.1,634.1 1764.6,684.1 1765.1,705.1 1765.6,645.5 1766.1,646.8 1766.6,636.3 1767.1,645.8 1767.6,687.4 1768.0,673.1 1768.5,698.1 1769.0,698.8 1769.5,649.4 1770.0,683.4 1770.5,624.9 1771.0,668.1 1771.5,682.8 1772.0,653.2 1772.5,632.6 1773.0,659.6 1773.5,694.6 1774.0,662.0 1774.5,641.3 1775.0,679.7 1775.5,685.5 1776.0,648.7 1776.5,666.7 1777.0,692.3 1777.5,677.4 1778.0,685.1 1778.5,663.5 1779.0,667.3 1779.5,646.0 1780.0,679.6 1780.5,701.8 1781.0,661.2 1781.5,651.2 1781.9,660.2 1782.4,648.4 1782.9,680.9 1783.4,689.2 1783.9,707.2 1784.4,691.5 1784.9,714.0 1785.4,648.5 1785.9,684.5 1786.4,675.9 1786.9,698.3 1787.4,696.9 1787.9,693.4 1788.4,677.0 1788.9,662.0 1789.4,716.9 1789.9,654.1 1790.4,693.9 1790.9,691.5 1791.4,655.7 1791.9,671.1 1792.4,701.2 1792.9,631.7 1793.4,687.3 1793.9,664.5 1794.4,665.5 1794.9,640.6 1795.4,679.0 1795.8,648.9 1796.3,684.9 1796.8,646.5 1797.3,685.3 1797.8,658.0 1798.3,630.6 1798.8,645.4 1799.3,667.3 1799.8,624.9 1800.3,662.2 1800.8,686.4 1801.3,654.5 1801.8,693.9 1802.3,646.4 1802.8,644.8 1803.3,681.4 1803.8,682.5 1804.3,666.0 1804.8,669.3 1805.3,689.7 1805.8,657.9 1806.3,711.6 1806.8,678.5 1807.3,677.9 1807.8,675.2 1808.3,663.3 1808.8,673.4 1809.3,657.5 1809.7,646.4 1810.2,683.0 1810.7,697.7 1811.2,693.9 1811.7,662.2 1812.2,689.4 1812.7,668.3 1813.2,647.8 1813.7,648.4 1814.2,637.5 1814.7,675.7 1815.2,691.9 1815.7,648.6 1816.2,663.2 1816.7,624.9 1817.2,669.4 1817.7,645.0 1818.2,652.2 1818.7,654.9 1819.2,659.3 1819.7,661.4 1820.2,710.8 1820.7,665.0 1821.2,649.2 1821.7,680.1 1822.2,633.9 1822.7,671.8 1823.2,649.3 1823.6,671.5 1824.1,674.7 1824.6,627.8 1825.1,676.0 1825.6,695.9 1826.1,684.3 1826.6,676.1 1827.1,625.3 1827.6,665.4 1828.1,633.9 1828.6,667.9 1829.1,662.4 1829.6,655.8 1830.1,632.6 1830.6,683.9 1831.1,633.5 1831.6,663.4 1832.1,690.6 1832.6,670.0 1833.1,675.0 1833.6,717.4 1834.1,657.3 1834.6,642.2 1835.1,678.6 1835.6,697.1 1836.1,639.2 1836.6,664.1 1837.1,648.7 1837.5,640.6 1838.0,680.3 1838.5,652.9 1839.0,674.6 1839.5,670.9 1840.0,671.4 1840.5,647.9 1841.0,646.7 1841.5,667.1 1842.0,672.8 1842.5,675.3 1843.0,662.6 1843.5,688.0 1844.0,679.9" fill="none" stroke="#f0f0f0" stroke-width="1.05" stroke-linejoin="miter"/><line x1="1477.4" y1="425" x2="1477.4" y2="779.5" stroke="#e8e030" stroke-width="1.2" stroke-dasharray="1.5,1.5"/><line x1="1477.4" y1="493.3" x2="1477.4" y2="573" stroke="#f0f06a" stroke-width="1.6"/><circle cx="1477.4" cy="493.3" r="6" fill="#ffee00"/><line x1="1356.7" y1="425" x2="1356.7" y2="779.5" stroke="#a83224" stroke-width="2.6"/><line x1="1357" y1="425" x2="1845" y2="425" stroke="#9a9a9a" stroke-width="1.5"/></svg>
<div class="t" style="left:1300.80px;top:415px;font-size:20px;line-height:23px;color:#fff;">-10.0</div>
<div class="t" style="left:1300.80px;top:486px;font-size:20px;line-height:23px;color:#fff;">-20.0</div>
<div class="t" style="left:1300.80px;top:557px;font-size:20px;line-height:23px;color:#fff;">-30.0</div>
<div class="t" style="left:1300.80px;top:628px;font-size:20px;line-height:23px;color:#fff;">-40.0</div>
<div class="t" style="left:1300.80px;top:699px;font-size:20px;line-height:23px;color:#fff;">-50.0</div>
<div class="t" style="left:1300.80px;top:770px;font-size:20px;line-height:23px;color:#fff;">-60.0</div>
<div class="t" style="left:1368.54px;top:787px;font-size:15px;line-height:17px;color:#fff;">-60</div>
<div class="t" style="left:1401.19px;top:806px;font-size:15px;line-height:17px;color:#fff;">-40</div>
<div class="t" style="left:1433.84px;top:787px;font-size:15px;line-height:17px;color:#fff;">-20</div>
<div class="t" style="left:1473.20px;top:806px;font-size:15px;line-height:17px;color:#fff;">0</div>
<div class="t" style="left:1501.61px;top:787px;font-size:15px;line-height:17px;color:#fff;">20</div>
<div class="t" style="left:1534.49px;top:806px;font-size:15px;line-height:17px;color:#fff;">40</div>
<div class="t" style="left:1566.91px;top:787px;font-size:15px;line-height:17px;color:#fff;">60</div>
<div class="t" style="left:1599.60px;top:806px;font-size:15px;line-height:17px;color:#fff;">80</div>
<div class="t" style="left:1627.86px;top:787px;font-size:15px;line-height:17px;color:#fff;">100</div>
<div class="t" style="left:1660.51px;top:806px;font-size:15px;line-height:17px;color:#fff;">120</div>
<div class="t" style="left:1693.16px;top:787px;font-size:15px;line-height:17px;color:#fff;">140</div>
<div class="t" style="left:1725.81px;top:806px;font-size:15px;line-height:17px;color:#fff;">160</div>
<div class="t" style="left:1758.46px;top:787px;font-size:15px;line-height:17px;color:#fff;">180</div>
<div class="t" style="left:1791.30px;top:806px;font-size:15px;line-height:17px;color:#fff;">200</div>
<div class="t" style="left:1823.95px;top:787px;font-size:15px;line-height:17px;color:#fff;">220</div>
<div class="t" style="left:1490.39px;top:831px;font-size:20.2px;line-height:23px;color:#fff;transform:scaleX(0.9947);">Distance Difference (km)</div>
<div class="t" style="left:1268.8px;top:603.1px;font-size:20px;line-height:20px;color:#fff;transform:translate(-50%,-50%) rotate(-90deg);transform-origin:50% 50%">Magnitude (dB)</div>
</body></html>
